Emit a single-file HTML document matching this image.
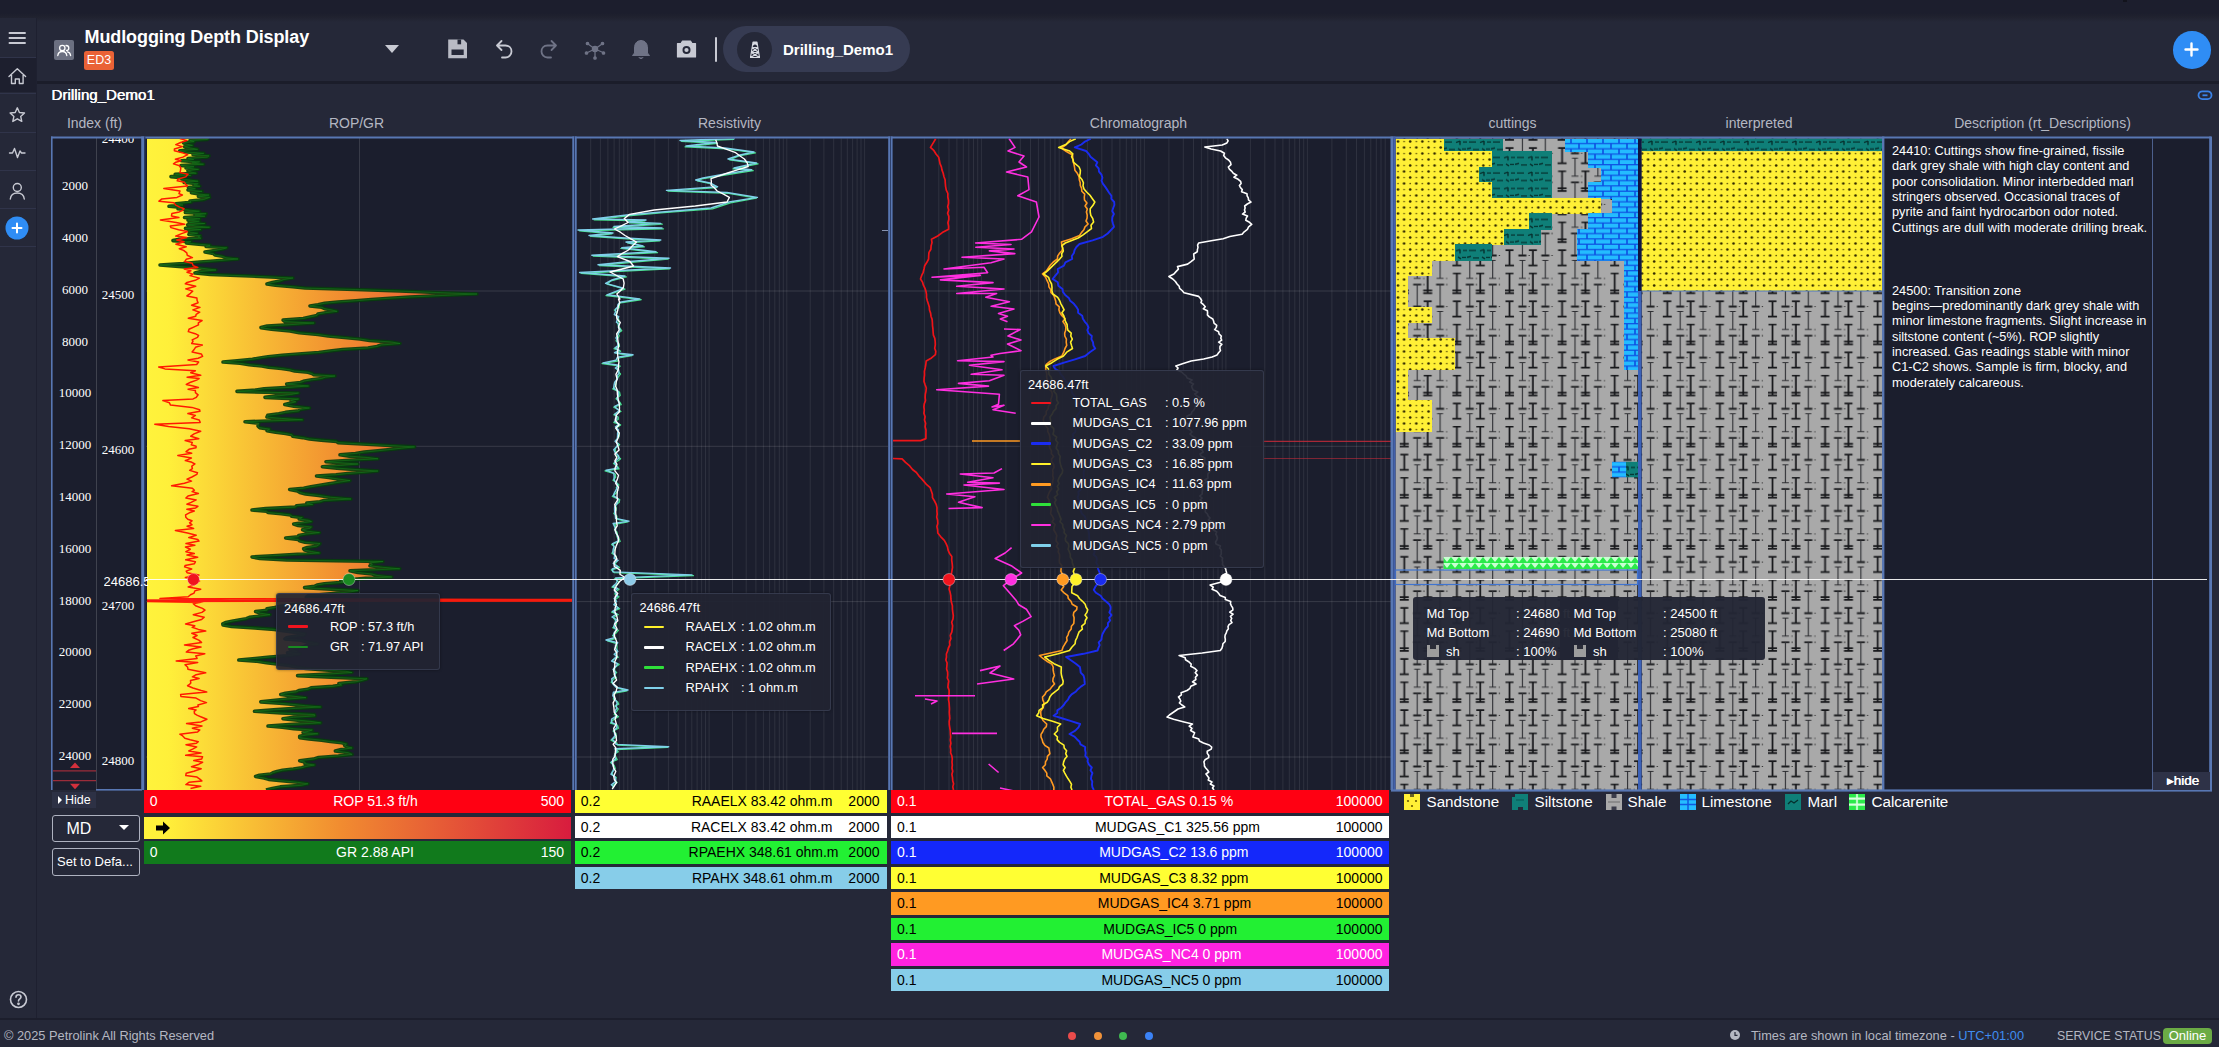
<!DOCTYPE html>
<html><head><meta charset="utf-8"><title>Mudlogging Depth Display</title><style>
*{box-sizing:border-box;margin:0;padding:0}
html,body{width:2219px;height:1047px;overflow:hidden;background:#252838;font-family:"Liberation Sans",sans-serif;color:#fff}
.abs{position:absolute}
.t{position:absolute;white-space:nowrap;line-height:1}
#topstrip{left:0;top:0;width:2219px;height:22px;background:linear-gradient(180deg,#1c1e2d 0,#1c1e2d 60%,#20222f 78%,#252838 100%)}
#side{left:0;top:18px;width:37px;height:1000px;background:#252838;border-right:1.5px solid #1e2030}
#side .sep{position:absolute;left:0;width:36px;height:1px;background:#30344a}
#hdrline{left:37px;top:81px;width:2182px;height:2.5px;background:#1b1d2a}
.trk{position:absolute;top:115px;font-size:14px;color:#b4b7c2;white-space:nowrap;transform:translateX(-50%);line-height:16px}
.idx{position:absolute;font-family:"Liberation Serif",serif;font-size:13px;color:#fff;white-space:nowrap;line-height:14px;transform:translate(-50%,-50%)}
.bar{position:absolute;height:22.6px;font-size:14px;line-height:22.6px;white-space:nowrap}
.bar .l{position:absolute;left:5.800px}.bar .r{position:absolute;right:7px}.bar .c{position:absolute;left:0;right:0;text-align:center}
.tip{position:absolute;background:rgba(33,36,50,0.93);border:1.5px solid rgba(70,76,100,0.55);border-radius:3px;font-size:12.800px;color:#fff;box-shadow:0 0 3px rgba(0,0,0,.4)}
.tip .h{position:absolute;left:7.500px;top:6px;line-height:15px;white-space:nowrap}
.tip .row{position:absolute;left:0;height:20px;line-height:20px;white-space:nowrap}
.tip .sw{position:absolute;left:10.500px;top:8.800px;width:19.500px;height:2.600px;border-radius:1px}
.tip .n{position:absolute;left:52px}
.leg{position:absolute;top:793px;font-size:15.200px;margin-left:0.500px;line-height:17px;color:#fff;white-space:nowrap}
.lic{position:absolute;top:794px;width:16px;height:16px}
.btn{position:absolute;border:1.5px solid #aeb2c0;border-radius:3px;color:#fff;white-space:nowrap}
.desc{position:absolute;left:1892px;font-size:12.750px;line-height:15.35px;color:#fff;white-space:nowrap}
</style></head>
<body>
<div class="abs" id="topstrip"></div>
<div class="abs" id="side">
<div class="abs" style="left:0;top:40px;width:36px;height:34px;background:#1d1f2e"></div>
<div class="sep" style="top:39px"></div>
<div class="sep" style="top:75px"></div>
<div class="sep" style="top:114px"></div>
<div class="sep" style="top:152px"></div>
<div class="sep" style="top:190px"></div>
<div class="sep" style="top:228px"></div>
</div>
<svg class="abs" style="left:0;top:18px" width="37" height="240" viewBox="0 18 37 240" fill="none" stroke="#c8cad3" stroke-width="1.4" stroke-linecap="round" stroke-linejoin="round">
<path d="M9.5 33H25M9.5 38H25M9.500 43H25" stroke-width="1.9"/>
<path d="M9 76.500L17.300 68.800L25.600 76.500M11.500 75V83.500H15.300V79H19.300V83.500H23.100V75"/>
<path d="M17.300 107.800L19.400 112.500L24.500 113L20.700 116.400L21.800 121.400L17.300 118.800L12.800 121.400L13.900 116.400L10.100 113L15.200 112.500Z"/>
<path d="M9.500 153H12.500L14.500 148.500L17.500 157.500L20 151L21.500 153H25"/>
<circle cx="17.300" cy="187.500" r="4"/><path d="M10.300 199C10.800 194.800 13.500 193 17.300 193C21.100 193 23.800 194.800 24.300 199"/>
<circle cx="17" cy="228" r="11.500" fill="#2f8df5" stroke="none"/><path d="M12.500 228H21.500M17 223.500V232.500" stroke="#fff" stroke-width="2"/>
</svg>
<svg class="abs" style="left:8px;top:989px" width="22" height="22" viewBox="0 0 22 22" fill="none" stroke="#c8cad3" stroke-width="1.6" stroke-linecap="round"><circle cx="10.5" cy="10.5" r="8"/><path d="M8 8.300C8 6.500 9.200 5.800 10.500 5.800C12 5.800 13 6.800 13 8C13 9.800 10.500 10 10.500 12"/><circle cx="10.5" cy="14.800" r="0.6" fill="#c8cad3"/></svg>
<div class="abs" style="left:54px;top:39.500px;width:20px;height:20.5px;background:#6b6f80;border-radius:2px"></div>
<svg class="abs" style="left:54px;top:39.500px" width="20" height="21" viewBox="0 0 20 21" fill="none" stroke="#fff" stroke-width="1.3" stroke-linecap="round"><circle cx="8.3" cy="8" r="2.700"/><path d="M3.800 15.500C4.200 12.500 6 11.500 8.300 11.500C10.600 11.500 12.400 12.500 12.800 15.500"/><path d="M12 5.500C13.800 5.500 14.800 6.700 14.800 8C14.800 9.300 13.800 10.500 12.500 10.500M13.500 11.800C15.300 12.100 16.300 13.300 16.600 15.500"/></svg>
<div class="t" style="left:84.5px;top:27.700px;font-size:18px;font-weight:bold;letter-spacing:-0.1px">Mudlogging Depth Display</div>
<div class="abs" style="left:84px;top:51px;width:30px;height:19px;background:#ea6236;border-radius:2.5px;font-size:12.5px;line-height:19px;text-align:center;color:#fff">ED3</div>
<div class="abs" style="left:385px;top:45px;width:0;height:0;border-left:7.5px solid transparent;border-right:7.5px solid transparent;border-top:8px solid #c8cad3"></div>
<svg class="abs" style="left:440px;top:34px" width="280" height="32" viewBox="440 34 280 32" fill="none" stroke-linecap="round" stroke-linejoin="round">
<path d="M448.200 39.500H463.500L467 43V58.200H448.200Z" fill="#b9bbc5" stroke="none"/><rect x="457.500" y="39.500" width="3.600" height="4.800" fill="#252838"/><rect x="451.500" y="49.500" width="12.200" height="5.500" fill="#252838"/>
<path d="M497 45.500H505.500C509.500 45.500 511.500 48.500 511.500 51.500C511.500 54.500 509 57.500 505.500 57.500H502M501.500 41L497 45.500L501.500 50" stroke="#c8cad3" stroke-width="1.800"/>
<path d="M556 45.500H547.500C543.500 45.500 541.500 48.500 541.500 51.500C541.500 54.500 544 57.500 547.500 57.500H551M551.500 41L556 45.500L551.500 50" stroke="#6f7386" stroke-width="1.800"/>
<g stroke="#6f7386" stroke-width="1.300"><circle cx="595" cy="49" r="2.600" fill="#6f7386"/><path d="M595 49L588 44M595 49L602 44M595 49L587.500 52.500M595 49L603 52.500M595 49L595 57"/><circle cx="587.500" cy="43.500" r="1.200" fill="#6f7386"/><circle cx="602.500" cy="43.500" r="1.200" fill="#6f7386"/><circle cx="586.500" cy="53" r="1.200" fill="#6f7386"/><circle cx="603.500" cy="53" r="1.200" fill="#6f7386"/><circle cx="595" cy="58" r="1.200" fill="#6f7386"/></g>
<path d="M641 40.500C636.500 40.500 634.500 44 634.500 48V53L632.500 55.500H649.500L647.500 53V48C647.500 44 645.500 40.500 641 40.500ZM639 57.500C639.500 59 642.500 59 643 57.500" fill="#6f7386" stroke="#6f7386" stroke-width="1"/>
<path d="M677.500 43.500H681L682.500 41H690.500L692 43.500H695.500V57H677.500Z" fill="#c8cad3" stroke="#c8cad3" stroke-width="1.200"/><circle cx="686.500" cy="50" r="4" fill="#252838" stroke="none"/><circle cx="686.500" cy="50" r="2.100" fill="#c8cad3" stroke="none"/>
<path d="M716 38V61" stroke="#c8cad3" stroke-width="2"/>
</svg>
<div class="abs" style="left:723px;top:26px;width:187px;height:46px;border-radius:23px;background:#363b52"></div>
<div class="abs" style="left:737px;top:31.500px;width:35px;height:35px;border-radius:50%;background:#252838"></div>
<svg class="abs" style="left:747px;top:40px" width="16" height="20" viewBox="0 0 16 20" fill="none" stroke="#d8dae2" stroke-width="1.100" stroke-linejoin="round"><path d="M6 2H10L12.500 17.500H3.500ZM5 7.500H11M4.300 12.500H11.700M5 7.500L11.700 12.500M11 7.500L4.300 12.500M4.300 12.500L12.500 17.500M11.700 12.500L3.500 17.500M6 2L10 5M10 2L6 5"/></svg>
<div class="t" style="left:783px;top:41.500px;font-size:15px;font-weight:bold">Drilling_Demo1</div>
<div class="abs" style="left:2173px;top:31px;width:37.500px;height:37.500px;border-radius:50%;background:#2f8df5"></div>
<svg class="abs" style="left:2173.200px;top:31.200px" width="37" height="37" viewBox="0 0 37 37"><path d="M12.500 18.500H24.500M18.500 12.500V24.500" stroke="#fff" stroke-width="2.400" stroke-linecap="round"/></svg>
<div class="abs" id="hdrline"></div>
<div class="abs" style="left:2123px;top:0;width:4px;height:2px;background:#12131c"></div>
<div class="t" style="left:51.300px;top:87px;font-size:15.100px;text-shadow:0.550px 0 0 #fff">Drilling_Demo1</div>
<svg class="abs" style="left:2196.500px;top:89px" width="16" height="12" viewBox="0 0 16 12" fill="none" stroke="#3a82e6" stroke-width="1.800"><rect x="1.500" y="2.300" width="13" height="7.800" rx="3.900"/><path d="M5.500 6.300H10.500"/></svg>
<div class="trk" style="left:94.5px">Index (ft)</div>
<div class="trk" style="left:356.5px">ROP/GR</div>
<div class="trk" style="left:729.5px">Resistivity</div>
<div class="trk" style="left:1138.5px">Chromatograph</div>
<div class="trk" style="left:1512.5px">cuttings</div>
<div class="trk" style="left:1759px">interpreted</div>
<div class="trk" style="left:2042.5px">Description (rt_Descriptions)</div>
<svg width="2219" height="1047" viewBox="0 0 2219 1047" style="position:absolute;left:0;top:0"><defs>
<linearGradient id="grfill" gradientUnits="userSpaceOnUse" x1="147" y1="0" x2="572" y2="0">
 <stop offset="0" stop-color="#fff33c"/><stop offset="0.05" stop-color="#fff03a"/>
 <stop offset="0.46" stop-color="#f18c30"/><stop offset="1" stop-color="#d81c3e"/>
</linearGradient>
<pattern id="pSand" patternUnits="userSpaceOnUse" x="1395" y="138" width="12.2" height="12">
 <rect width="12.2" height="12" fill="#fff036"/>
 <circle cx="3" cy="3.500" r="1.3" fill="#332b00"/><circle cx="9.1" cy="9.500" r="1.3" fill="#332b00"/>
 <circle cx="9.1" cy="3.500" r="0.85" fill="#665808"/><circle cx="3" cy="9.500" r="0.85" fill="#665808"/>
</pattern>
<pattern id="pShale" patternUnits="userSpaceOnUse" x="1399.8" y="681.5" width="52.6" height="51.1">
 <rect width="52.6" height="51.1" fill="#a9a9a9"/>
 <path d="M4.5 0V20.5M0.5 0.5H8.5M0.0 17.8H9.0M0.0 20.6H9.0M4.5 28.2V43.9M0.5 28.7H8.5M0.0 43.9H9.0M27.9 0V20.5M23.9 0.5H31.9M23.4 17.8H32.4M23.4 20.6H32.4M27.9 28.2V43.9M23.9 28.7H31.9M23.4 43.9H32.4" stroke="#16171a" stroke-width="1.75" fill="none"/>
 <path d="M13.399999999999999 33.9H21.4M13.399999999999999 11.9H21.4M36.3 33.9H44.3M36.3 11.9H44.3" stroke="#1c1d20" stroke-width="1.8" fill="none"/>
 <path d="M17.4 39.1V51.1M17.4 0V5.7M13.899999999999999 5.7H20.9M17.4 11.9V33.4M14.399999999999999 38.8H20.4M40.3 39.1V51.1M40.3 0V5.7M36.8 5.7H43.8M40.3 11.9V33.4M37.3 38.8H43.3" stroke="#2c2d31" stroke-width="1.1" fill="none"/>
 <path d="M23.5 33.9h1.3M23.5 11.9h1.3M46.4 33.9h1.3M46.4 11.9h1.3M23.5 5.7h1M46.4 5.7h1" stroke="#333" stroke-width="1.2"/>
</pattern>
<pattern id="pLime" patternUnits="userSpaceOnUse" x="1395" y="138" width="16" height="10.6">
 <rect width="16" height="10.6" fill="#0d4ee2"/>
 <rect x="0.8" y="0.8" width="14.4" height="4.1" fill="#24bcff"/>
 <rect x="-7.200" y="6.1" width="14.4" height="4.1" fill="#24bcff"/><rect x="8.800" y="6.1" width="14.4" height="4.1" fill="#24bcff"/>
</pattern>
<pattern id="pMarl" patternUnits="userSpaceOnUse" x="1395" y="138" width="24" height="15.5">
 <rect width="24" height="15.5" fill="#0f7f78"/>
 <g stroke="#05302e" stroke-width="1.4" fill="none">
  <path d="M2 4H9M13 4.5l4 -1.5M17 3v4M20 4H24M0 11l4 -1M6 11.5H12M15 10.5l3 2M19 11H23"/>
 </g>
</pattern>
<pattern id="pCalc" patternUnits="userSpaceOnUse" x="1443" y="557" width="8" height="6">
 <rect width="8" height="6" fill="#2bea4a"/>
 <path d="M0 0L4 5L8 0Z" fill="#c9ffd2"/>
</pattern>
<clipPath id="cROP"><rect x="147" y="138.5" width="425" height="651.5"/></clipPath>
<clipPath id="cRES"><rect x="577" y="138.5" width="311" height="651.5"/></clipPath>
<clipPath id="cCH"><rect x="893" y="138.5" width="498" height="651.5"/></clipPath>
</defs>
<rect x="52" y="137" width="2159" height="653" fill="#1b1e2d"/>
<path d="M146 291H572M577 291H888M893 291H1391" stroke="#ffffff" stroke-opacity="0.13" stroke-width="1"/>
<path d="M146 446.3H572M577 446.3H888M893 446.3H1391" stroke="#ffffff" stroke-opacity="0.13" stroke-width="1"/>
<path d="M146 601.6H572M577 601.6H888M893 601.6H1391" stroke="#ffffff" stroke-opacity="0.13" stroke-width="1"/>
<path d="M146 757H572M577 757H888M893 757H1391" stroke="#ffffff" stroke-opacity="0.13" stroke-width="1"/>
<path d="M359.5 138V790" stroke="#ffffff" stroke-opacity="0.13" stroke-width="1"/>
<path d="M96.5 138V790" stroke="#ffffff" stroke-opacity="0.16" stroke-width="1"/>
<path d="M590.7 138.5V790M600.4 138.5V790M607.9 138.5V790M614.1 138.5V790M619.3 138.5V790M623.8 138.5V790M627.8 138.5V790M631.3 138.5V790M654.8 138.5V790M668.4 138.5V790M678.2 138.5V790M685.7 138.5V790M691.8 138.5V790M697.1 138.5V790M701.6 138.5V790M705.5 138.5V790M709.1 138.5V790M732.5 138.5V790M746.2 138.5V790M755.9 138.5V790M763.4 138.5V790M769.6 138.5V790M774.8 138.5V790M779.3 138.5V790M783.3 138.5V790M786.8 138.5V790M810.2 138.5V790M823.9 138.5V790M833.7 138.5V790M841.2 138.5V790M847.3 138.5V790M852.6 138.5V790M857.1 138.5V790M861.0 138.5V790M864.6 138.5V790" stroke="#ffffff" stroke-opacity="0.085" stroke-width="1"/>
<path d="M924.4 138.5V790M938.8 138.5V790M949.0 138.5V790M956.9 138.5V790M963.3 138.5V790M968.8 138.5V790M973.5 138.5V790M977.7 138.5V790M981.4 138.5V790M1005.9 138.5V790M1020.3 138.5V790M1030.5 138.5V790M1038.4 138.5V790M1044.8 138.5V790M1050.3 138.5V790M1055.0 138.5V790M1059.2 138.5V790M1062.9 138.5V790M1087.4 138.5V790M1101.8 138.5V790M1112.0 138.5V790M1119.9 138.5V790M1126.3 138.5V790M1131.8 138.5V790M1136.5 138.5V790M1140.7 138.5V790M1144.4 138.5V790M1168.9 138.5V790M1183.3 138.5V790M1193.5 138.5V790M1201.4 138.5V790M1207.8 138.5V790M1213.3 138.5V790M1218.0 138.5V790M1222.2 138.5V790M1225.9 138.5V790M1250.4 138.5V790M1264.8 138.5V790M1275.0 138.5V790M1282.9 138.5V790M1289.3 138.5V790M1294.8 138.5V790M1299.5 138.5V790M1303.7 138.5V790M1307.4 138.5V790M1331.9 138.5V790M1346.3 138.5V790M1356.5 138.5V790M1364.4 138.5V790M1370.8 138.5V790M1376.3 138.5V790M1381.0 138.5V790M1385.2 138.5V790" stroke="#ffffff" stroke-opacity="0.085" stroke-width="1"/>
<g clip-path="url(#cROP)">
<path d="M147.0 138.5 L209.0 138.5 L207.1 139.5 L190.0 140.5 L194.3 141.7 L183.5 142.8 L186.0 144.0 L192.5 145.3 L184.6 146.7 L191.0 148.0 L197.7 149.3 L179.8 150.7 L187.0 152.0 L203.9 153.3 L193.0 154.5 L209.0 155.8 L207.3 157.2 L188.0 158.5 L193.8 159.6 L181.7 160.8 L199.7 161.9 L192.0 163.0 L203.6 164.2 L181.0 165.5 L194.0 166.8 L186.0 168.0 L198.6 169.3 L187.9 170.7 L191.0 172.0 L196.3 173.2 L175.2 174.3 L190.7 175.4 L171.0 176.6 L181.8 177.7 L181.5 178.9 L190.0 180.0 L198.2 181.2 L184.2 182.5 L198.3 183.8 L194.0 185.0 L199.9 186.2 L188.5 187.5 L195.5 188.8 L188.0 190.0 L202.1 191.3 L191.4 192.7 L199.0 194.0 L209.1 195.1 L198.4 196.2 L209.7 197.3 L207.0 198.4 L203.2 199.7 L190.0 201.0 L191.0 202.3 L175.9 203.7 L183.0 205.0 L169.0 206.3 L183.1 207.5 L178.0 208.8 L189.0 210.0 L199.5 211.2 L185.4 212.5 L206.2 213.8 L195.0 215.0 L204.9 216.2 L184.5 217.5 L200.1 218.8 L188.0 220.0 L199.4 221.2 L189.2 222.4 L204.8 223.6 L187.7 224.8 L196.0 226.0 L209.6 227.2 L185.5 228.4 L201.0 229.6 L188.3 230.8 L190.0 232.0 L197.7 233.2 L188.9 234.5 L200.4 235.8 L198.0 237.0 L201.0 238.2 L178.4 239.4 L173.0 240.6 L191.0 241.7 L186.3 242.9 L196.0 244.0 L210.2 245.2 L206.1 246.5 L226.8 247.8 L223.0 249.0 L214.8 250.5 L205.0 252.0 L213.4 253.5 L215.0 255.0 L222.4 256.3 L225.9 257.7 L238.0 259.0 L220.5 260.5 L200.0 262.0 L183.2 263.5 L160.0 265.0 L178.9 266.5 L200.0 268.0 L216.0 270.0 L200.7 271.5 L195.0 273.0 L210.4 274.5 L250.0 276.0 L293.0 278.0 L284.1 279.5 L280.0 281.0 L272.4 282.5 L267.0 284.0 L275.5 285.3 L292.8 286.7 L305.0 288.0 L355.7 289.5 L400.0 291.0 L436.3 292.5 L477.0 294.0 L442.1 295.5 L410.0 297.0 L390.1 298.2 L371.3 299.5 L355.8 300.8 L338.0 302.0 L324.7 303.3 L318.0 304.7 L310.0 306.0 L321.9 307.3 L324.8 308.7 L332.0 310.0 L337.1 311.3 L325.5 312.7 L318.0 314.0 L317.0 315.5 L310.0 317.0 L303.3 318.5 L283.1 320.1 L285.0 321.6 L314.0 323.0 L293.0 324.5 L267.2 326.1 L261.0 327.6 L271.5 329.3 L290.0 331.0 L299.3 332.8 L318.0 334.5 L328.2 336.0 L344.5 337.5 L360.0 339.0 L369.6 340.5 L391.6 342.0 L400.0 343.5 L381.2 345.0 L377.1 346.5 L368.0 348.0 L342.8 349.5 L330.0 351.0 L318.8 352.5 L298.6 354.0 L282.2 355.3 L268.1 356.7 L260.0 358.0 L252.5 359.3 L237.3 360.7 L223.0 362.0 L240.1 363.3 L249.3 364.7 L262.0 366.0 L268.5 367.2 L281.5 368.5 L290.1 369.8 L294.7 371.0 L308.0 372.2 L312.1 373.5 L314.0 374.8 L335.0 376.0 L325.2 377.2 L321.7 378.5 L311.7 379.8 L304.6 381.0 L300.5 382.5 L286.7 384.0 L308.6 386.0 L289.3 387.4 L264.2 388.7 L256.1 390.0 L237.0 391.4 L298.6 393.0 L290.8 394.5 L277.7 395.9 L265.0 397.4 L298.6 399.0 L291.0 400.4 L295.8 401.8 L290.8 403.1 L284.8 404.5 L293.9 406.2 L309.5 408.0 L300.2 409.4 L298.9 410.9 L285.5 412.4 L278.8 413.8 L267.7 415.4 L267.0 417.0 L281.3 418.4 L302.6 419.8 L245.0 421.8 L258.9 423.2 L258.5 424.6 L258.0 426.0 L259.5 427.6 L269.7 429.1 L267.0 430.7 L275.6 432.1 L285.6 433.5 L292.1 434.8 L292.6 436.2 L302.6 437.6 L309.4 438.9 L321.2 440.1 L336.5 441.4 L338.0 442.6 L362.1 444.0 L389.9 445.5 L414.6 446.9 L401.6 448.2 L390.2 449.5 L378.0 450.8 L364.4 452.1 L355.5 453.5 L340.0 454.8 L349.4 456.1 L367.6 457.5 L378.0 458.8 L350.3 460.2 L326.0 461.7 L358.0 464.0 L340.8 465.4 L322.4 466.7 L337.0 468.1 L357.0 469.6 L378.0 471.0 L365.3 472.2 L347.9 473.5 L336.0 474.8 L316.5 476.0 L328.8 477.5 L339.0 479.1 L350.0 480.6 L339.0 482.2 L328.8 483.9 L318.5 485.5 L310.9 486.8 L303.7 488.2 L289.7 489.5 L297.5 491.0 L299.9 492.4 L305.5 493.9 L318.5 495.4 L330.5 497.2 L351.0 499.0 L324.0 500.5 L320.0 501.8 L306.8 503.1 L312.7 504.4 L296.6 505.7 L295.5 507.1 L265.8 508.6 L252.0 510.0 L266.6 511.2 L268.0 512.5 L281.2 513.8 L290.7 515.0 L291.8 516.3 L302.3 517.6 L299.2 519.0 L308.6 520.3 L311.5 521.6 L293.7 524.0 L298.2 525.5 L311.5 527.0 L309.9 528.4 L302.6 529.7 L307.1 531.2 L319.5 532.7 L306.4 534.0 L298.7 535.4 L298.3 536.7 L285.7 538.0 L298.2 539.4 L299.5 540.8 L305.0 542.2 L320.0 543.6 L318.5 545.0 L316.4 546.2 L307.4 547.5 L303.7 548.8 L304.6 550.0 L311.6 551.5 L319.5 553.0 L297.5 554.3 L272.7 555.7 L252.0 557.0 L260.0 558.5 L286.7 560.0 L383.0 561.5 L370.4 562.9 L372.4 564.4 L370.0 565.8 L382.8 567.3 L399.8 568.8 L350.0 570.8 L357.8 572.4 L372.0 574.0 L377.1 575.5 L391.8 577.0 L365.6 578.4 L349.0 579.7 L340.8 581.0 L343.3 582.4 L324.4 583.7 L317.1 585.0 L314.5 586.3 L304.6 587.6 L331.4 589.1 L358.0 590.6 L350.3 591.9 L336.3 593.2 L321.9 594.5 L308.0 595.8 L306.4 597.2 L318.4 598.6 L330.0 600.0 L309.2 601.2 L313.4 602.5 L301.7 603.8 L290.0 605.0 L280.5 606.3 L274.8 607.6 L267.0 608.9 L267.2 610.2 L255.6 611.5 L260.2 613.1 L270.0 614.7 L260.3 616.0 L249.4 617.4 L246.3 618.7 L238.8 620.0 L231.9 621.2 L225.9 622.5 L222.8 623.8 L223.0 625.0 L231.7 626.5 L254.7 627.9 L274.5 629.4 L285.0 630.9 L296.4 632.5 L305.0 634.0 L303.8 635.2 L293.3 636.5 L286.5 637.8 L285.0 639.0 L301.4 640.2 L305.4 641.5 L312.1 642.8 L318.0 644.0 L307.4 645.2 L304.0 646.5 L300.0 647.8 L290.0 649.0 L293.3 650.2 L296.8 651.5 L287.5 652.8 L300.0 654.0 L290.0 655.5 L270.0 657.0 L255.4 658.5 L238.8 660.0 L257.2 661.3 L266.5 662.7 L276.6 664.0 L289.1 665.5 L296.5 667.0 L305.7 668.5 L325.0 670.0 L345.6 671.2 L352.0 672.5 L329.6 674.0 L297.6 675.6 L331.1 677.2 L367.0 678.8 L362.5 680.3 L355.5 681.9 L338.9 683.5 L341.7 685.0 L332.9 686.4 L311.1 687.9 L308.0 689.3 L298.9 690.6 L296.3 691.9 L285.5 693.2 L280.8 694.5 L293.0 696.1 L306.0 697.7 L287.1 699.1 L272.9 700.5 L260.8 701.9 L279.3 703.2 L293.9 704.5 L305.2 705.7 L320.7 707.0 L295.7 708.4 L273.7 709.9 L254.5 711.3 L280.9 712.9 L314.4 714.5 L314.9 715.9 L293.6 717.3 L283.0 718.7 L297.6 720.1 L312.1 721.5 L320.7 722.9 L289.4 724.5 L268.0 726.0 L282.3 727.3 L293.9 728.7 L312.3 730.0 L308.4 731.3 L303.1 732.5 L317.9 733.8 L306.0 735.1 L299.7 736.3 L299.7 737.6 L309.1 738.9 L321.6 740.2 L330.5 741.5 L341.7 742.8 L346.5 744.1 L344.7 745.4 L346.9 746.7 L352.0 748.0 L341.3 749.5 L335.4 751.0 L348.3 752.7 L352.0 754.4 L338.4 756.0 L318.6 757.5 L313.3 759.1 L299.7 760.7 L305.1 762.1 L305.0 763.6 L314.4 765.0 L306.9 766.3 L301.8 767.7 L293.4 769.0 L282.6 770.2 L277.1 771.5 L272.9 772.8 L270.6 774.0 L259.5 775.2 L255.6 776.5 L264.1 778.0 L268.7 779.4 L284.1 780.9 L297.5 782.3 L308.0 783.8 L301.6 785.3 L280.3 786.9 L272.4 788.5 L266.0 790.0 L147.0 790.0Z" fill="url(#grfill)"/>
<path d="M209.0 138.5 L207.1 139.5 L190.0 140.5 L194.3 141.7 L183.5 142.8 L186.0 144.0 L192.5 145.3 L184.6 146.7 L191.0 148.0 L197.7 149.3 L179.8 150.7 L187.0 152.0 L203.9 153.3 L193.0 154.5 L209.0 155.8 L207.3 157.2 L188.0 158.5 L193.8 159.6 L181.7 160.8 L199.7 161.9 L192.0 163.0 L203.6 164.2 L181.0 165.5 L194.0 166.8 L186.0 168.0 L198.6 169.3 L187.9 170.7 L191.0 172.0 L196.3 173.2 L175.2 174.3 L190.7 175.4 L171.0 176.6 L181.8 177.7 L181.5 178.9 L190.0 180.0 L198.2 181.2 L184.2 182.5 L198.3 183.8 L194.0 185.0 L199.9 186.2 L188.5 187.5 L195.5 188.8 L188.0 190.0 L202.1 191.3 L191.4 192.7 L199.0 194.0 L209.1 195.1 L198.4 196.2 L209.7 197.3 L207.0 198.4 L203.2 199.7 L190.0 201.0 L191.0 202.3 L175.9 203.7 L183.0 205.0 L169.0 206.3 L183.1 207.5 L178.0 208.8 L189.0 210.0 L199.5 211.2 L185.4 212.5 L206.2 213.8 L195.0 215.0 L204.9 216.2 L184.5 217.5 L200.1 218.8 L188.0 220.0 L199.4 221.2 L189.2 222.4 L204.8 223.6 L187.7 224.8 L196.0 226.0 L209.6 227.2 L185.5 228.4 L201.0 229.6 L188.3 230.8 L190.0 232.0 L197.7 233.2 L188.9 234.5 L200.4 235.8 L198.0 237.0 L201.0 238.2 L178.4 239.4 L173.0 240.6 L191.0 241.7 L186.3 242.9 L196.0 244.0 L210.2 245.2 L206.1 246.5 L226.8 247.8 L223.0 249.0 L214.8 250.5 L205.0 252.0 L213.4 253.5 L215.0 255.0 L222.4 256.3 L225.9 257.7 L238.0 259.0 L220.5 260.5 L200.0 262.0 L183.2 263.5 L160.0 265.0 L178.9 266.5 L200.0 268.0 L216.0 270.0 L200.7 271.5 L195.0 273.0 L210.4 274.5 L250.0 276.0 L293.0 278.0 L284.1 279.5 L280.0 281.0 L272.4 282.5 L267.0 284.0 L275.5 285.3 L292.8 286.7 L305.0 288.0 L355.7 289.5 L400.0 291.0 L436.3 292.5 L477.0 294.0 L442.1 295.5 L410.0 297.0 L390.1 298.2 L371.3 299.5 L355.8 300.8 L338.0 302.0 L324.7 303.3 L318.0 304.7 L310.0 306.0 L321.9 307.3 L324.8 308.7 L332.0 310.0 L337.1 311.3 L325.5 312.7 L318.0 314.0 L317.0 315.5 L310.0 317.0 L303.3 318.5 L283.1 320.1 L285.0 321.6 L314.0 323.0 L293.0 324.5 L267.2 326.1 L261.0 327.6 L271.5 329.3 L290.0 331.0 L299.3 332.8 L318.0 334.5 L328.2 336.0 L344.5 337.5 L360.0 339.0 L369.6 340.5 L391.6 342.0 L400.0 343.5 L381.2 345.0 L377.1 346.5 L368.0 348.0 L342.8 349.5 L330.0 351.0 L318.8 352.5 L298.6 354.0 L282.2 355.3 L268.1 356.7 L260.0 358.0 L252.5 359.3 L237.3 360.7 L223.0 362.0 L240.1 363.3 L249.3 364.7 L262.0 366.0 L268.5 367.2 L281.5 368.5 L290.1 369.8 L294.7 371.0 L308.0 372.2 L312.1 373.5 L314.0 374.8 L335.0 376.0 L325.2 377.2 L321.7 378.5 L311.7 379.8 L304.6 381.0 L300.5 382.5 L286.7 384.0 L308.6 386.0 L289.3 387.4 L264.2 388.7 L256.1 390.0 L237.0 391.4 L298.6 393.0 L290.8 394.5 L277.7 395.9 L265.0 397.4 L298.6 399.0 L291.0 400.4 L295.8 401.8 L290.8 403.1 L284.8 404.5 L293.9 406.2 L309.5 408.0 L300.2 409.4 L298.9 410.9 L285.5 412.4 L278.8 413.8 L267.7 415.4 L267.0 417.0 L281.3 418.4 L302.6 419.8 L245.0 421.8 L258.9 423.2 L258.5 424.6 L258.0 426.0 L259.5 427.6 L269.7 429.1 L267.0 430.7 L275.6 432.1 L285.6 433.5 L292.1 434.8 L292.6 436.2 L302.6 437.6 L309.4 438.9 L321.2 440.1 L336.5 441.4 L338.0 442.6 L362.1 444.0 L389.9 445.5 L414.6 446.9 L401.6 448.2 L390.2 449.5 L378.0 450.8 L364.4 452.1 L355.5 453.5 L340.0 454.8 L349.4 456.1 L367.6 457.5 L378.0 458.8 L350.3 460.2 L326.0 461.7 L358.0 464.0 L340.8 465.4 L322.4 466.7 L337.0 468.1 L357.0 469.6 L378.0 471.0 L365.3 472.2 L347.9 473.5 L336.0 474.8 L316.5 476.0 L328.8 477.5 L339.0 479.1 L350.0 480.6 L339.0 482.2 L328.8 483.9 L318.5 485.5 L310.9 486.8 L303.7 488.2 L289.7 489.5 L297.5 491.0 L299.9 492.4 L305.5 493.9 L318.5 495.4 L330.5 497.2 L351.0 499.0 L324.0 500.5 L320.0 501.8 L306.8 503.1 L312.7 504.4 L296.6 505.7 L295.5 507.1 L265.8 508.6 L252.0 510.0 L266.6 511.2 L268.0 512.5 L281.2 513.8 L290.7 515.0 L291.8 516.3 L302.3 517.6 L299.2 519.0 L308.6 520.3 L311.5 521.6 L293.7 524.0 L298.2 525.5 L311.5 527.0 L309.9 528.4 L302.6 529.7 L307.1 531.2 L319.5 532.7 L306.4 534.0 L298.7 535.4 L298.3 536.7 L285.7 538.0 L298.2 539.4 L299.5 540.8 L305.0 542.2 L320.0 543.6 L318.5 545.0 L316.4 546.2 L307.4 547.5 L303.7 548.8 L304.6 550.0 L311.6 551.5 L319.5 553.0 L297.5 554.3 L272.7 555.7 L252.0 557.0 L260.0 558.5 L286.7 560.0 L383.0 561.5 L370.4 562.9 L372.4 564.4 L370.0 565.8 L382.8 567.3 L399.8 568.8 L350.0 570.8 L357.8 572.4 L372.0 574.0 L377.1 575.5 L391.8 577.0 L365.6 578.4 L349.0 579.7 L340.8 581.0 L343.3 582.4 L324.4 583.7 L317.1 585.0 L314.5 586.3 L304.6 587.6 L331.4 589.1 L358.0 590.6 L350.3 591.9 L336.3 593.2 L321.9 594.5 L308.0 595.8 L306.4 597.2 L318.4 598.6 L330.0 600.0 L309.2 601.2 L313.4 602.5 L301.7 603.8 L290.0 605.0 L280.5 606.3 L274.8 607.6 L267.0 608.9 L267.2 610.2 L255.6 611.5 L260.2 613.1 L270.0 614.7 L260.3 616.0 L249.4 617.4 L246.3 618.7 L238.8 620.0 L231.9 621.2 L225.9 622.5 L222.8 623.8 L223.0 625.0 L231.7 626.5 L254.7 627.9 L274.5 629.4 L285.0 630.9 L296.4 632.5 L305.0 634.0 L303.8 635.2 L293.3 636.5 L286.5 637.8 L285.0 639.0 L301.4 640.2 L305.4 641.5 L312.1 642.8 L318.0 644.0 L307.4 645.2 L304.0 646.5 L300.0 647.8 L290.0 649.0 L293.3 650.2 L296.8 651.5 L287.5 652.8 L300.0 654.0 L290.0 655.5 L270.0 657.0 L255.4 658.5 L238.8 660.0 L257.2 661.3 L266.5 662.7 L276.6 664.0 L289.1 665.5 L296.5 667.0 L305.7 668.5 L325.0 670.0 L345.6 671.2 L352.0 672.5 L329.6 674.0 L297.6 675.6 L331.1 677.2 L367.0 678.8 L362.5 680.3 L355.5 681.9 L338.9 683.5 L341.7 685.0 L332.9 686.4 L311.1 687.9 L308.0 689.3 L298.9 690.6 L296.3 691.9 L285.5 693.2 L280.8 694.5 L293.0 696.1 L306.0 697.7 L287.1 699.1 L272.9 700.5 L260.8 701.9 L279.3 703.2 L293.9 704.5 L305.2 705.7 L320.7 707.0 L295.7 708.4 L273.7 709.9 L254.5 711.3 L280.9 712.9 L314.4 714.5 L314.9 715.9 L293.6 717.3 L283.0 718.7 L297.6 720.1 L312.1 721.5 L320.7 722.9 L289.4 724.5 L268.0 726.0 L282.3 727.3 L293.9 728.7 L312.3 730.0 L308.4 731.3 L303.1 732.5 L317.9 733.8 L306.0 735.1 L299.7 736.3 L299.7 737.6 L309.1 738.9 L321.6 740.2 L330.5 741.5 L341.7 742.8 L346.5 744.1 L344.7 745.4 L346.9 746.7 L352.0 748.0 L341.3 749.5 L335.4 751.0 L348.3 752.7 L352.0 754.4 L338.4 756.0 L318.6 757.5 L313.3 759.1 L299.7 760.7 L305.1 762.1 L305.0 763.6 L314.4 765.0 L306.9 766.3 L301.8 767.7 L293.4 769.0 L282.6 770.2 L277.1 771.5 L272.9 772.8 L270.6 774.0 L259.5 775.2 L255.6 776.5 L264.1 778.0 L268.7 779.4 L284.1 780.9 L297.5 782.3 L308.0 783.8 L301.6 785.3 L280.3 786.9 L272.4 788.5 L266.0 790.0" fill="none" stroke="#083d0e" stroke-width="3.6" stroke-linejoin="round" stroke-opacity="0.92"/>
<path d="M209.0 138.5 L207.1 139.5 L190.0 140.5 L194.3 141.7 L183.5 142.8 L186.0 144.0 L192.5 145.3 L184.6 146.7 L191.0 148.0 L197.7 149.3 L179.8 150.7 L187.0 152.0 L203.9 153.3 L193.0 154.5 L209.0 155.8 L207.3 157.2 L188.0 158.5 L193.8 159.6 L181.7 160.8 L199.7 161.9 L192.0 163.0 L203.6 164.2 L181.0 165.5 L194.0 166.8 L186.0 168.0 L198.6 169.3 L187.9 170.7 L191.0 172.0 L196.3 173.2 L175.2 174.3 L190.7 175.4 L171.0 176.6 L181.8 177.7 L181.5 178.9 L190.0 180.0 L198.2 181.2 L184.2 182.5 L198.3 183.8 L194.0 185.0 L199.9 186.2 L188.5 187.5 L195.5 188.8 L188.0 190.0 L202.1 191.3 L191.4 192.7 L199.0 194.0 L209.1 195.1 L198.4 196.2 L209.7 197.3 L207.0 198.4 L203.2 199.7 L190.0 201.0 L191.0 202.3 L175.9 203.7 L183.0 205.0 L169.0 206.3 L183.1 207.5 L178.0 208.8 L189.0 210.0 L199.5 211.2 L185.4 212.5 L206.2 213.8 L195.0 215.0 L204.9 216.2 L184.5 217.5 L200.1 218.8 L188.0 220.0 L199.4 221.2 L189.2 222.4 L204.8 223.6 L187.7 224.8 L196.0 226.0 L209.6 227.2 L185.5 228.4 L201.0 229.6 L188.3 230.8 L190.0 232.0 L197.7 233.2 L188.9 234.5 L200.4 235.8 L198.0 237.0 L201.0 238.2 L178.4 239.4 L173.0 240.6 L191.0 241.7 L186.3 242.9 L196.0 244.0 L210.2 245.2 L206.1 246.5 L226.8 247.8 L223.0 249.0 L214.8 250.5 L205.0 252.0 L213.4 253.5 L215.0 255.0 L222.4 256.3 L225.9 257.7 L238.0 259.0 L220.5 260.5 L200.0 262.0 L183.2 263.5 L160.0 265.0 L178.9 266.5 L200.0 268.0 L216.0 270.0 L200.7 271.5 L195.0 273.0 L210.4 274.5 L250.0 276.0 L293.0 278.0 L284.1 279.5 L280.0 281.0 L272.4 282.5 L267.0 284.0 L275.5 285.3 L292.8 286.7 L305.0 288.0 L355.7 289.5 L400.0 291.0 L436.3 292.5 L477.0 294.0 L442.1 295.5 L410.0 297.0 L390.1 298.2 L371.3 299.5 L355.8 300.8 L338.0 302.0 L324.7 303.3 L318.0 304.7 L310.0 306.0 L321.9 307.3 L324.8 308.7 L332.0 310.0 L337.1 311.3 L325.5 312.7 L318.0 314.0 L317.0 315.5 L310.0 317.0 L303.3 318.5 L283.1 320.1 L285.0 321.6 L314.0 323.0 L293.0 324.5 L267.2 326.1 L261.0 327.6 L271.5 329.3 L290.0 331.0 L299.3 332.8 L318.0 334.5 L328.2 336.0 L344.5 337.5 L360.0 339.0 L369.6 340.5 L391.6 342.0 L400.0 343.5 L381.2 345.0 L377.1 346.5 L368.0 348.0 L342.8 349.5 L330.0 351.0 L318.8 352.5 L298.6 354.0 L282.2 355.3 L268.1 356.7 L260.0 358.0 L252.5 359.3 L237.3 360.7 L223.0 362.0 L240.1 363.3 L249.3 364.7 L262.0 366.0 L268.5 367.2 L281.5 368.5 L290.1 369.8 L294.7 371.0 L308.0 372.2 L312.1 373.5 L314.0 374.8 L335.0 376.0 L325.2 377.2 L321.7 378.5 L311.7 379.8 L304.6 381.0 L300.5 382.5 L286.7 384.0 L308.6 386.0 L289.3 387.4 L264.2 388.7 L256.1 390.0 L237.0 391.4 L298.6 393.0 L290.8 394.5 L277.7 395.9 L265.0 397.4 L298.6 399.0 L291.0 400.4 L295.8 401.8 L290.8 403.1 L284.8 404.5 L293.9 406.2 L309.5 408.0 L300.2 409.4 L298.9 410.9 L285.5 412.4 L278.8 413.8 L267.7 415.4 L267.0 417.0 L281.3 418.4 L302.6 419.8 L245.0 421.8 L258.9 423.2 L258.5 424.6 L258.0 426.0 L259.5 427.6 L269.7 429.1 L267.0 430.7 L275.6 432.1 L285.6 433.5 L292.1 434.8 L292.6 436.2 L302.6 437.6 L309.4 438.9 L321.2 440.1 L336.5 441.4 L338.0 442.6 L362.1 444.0 L389.9 445.5 L414.6 446.9 L401.6 448.2 L390.2 449.5 L378.0 450.8 L364.4 452.1 L355.5 453.5 L340.0 454.8 L349.4 456.1 L367.6 457.5 L378.0 458.8 L350.3 460.2 L326.0 461.7 L358.0 464.0 L340.8 465.4 L322.4 466.7 L337.0 468.1 L357.0 469.6 L378.0 471.0 L365.3 472.2 L347.9 473.5 L336.0 474.8 L316.5 476.0 L328.8 477.5 L339.0 479.1 L350.0 480.6 L339.0 482.2 L328.8 483.9 L318.5 485.5 L310.9 486.8 L303.7 488.2 L289.7 489.5 L297.5 491.0 L299.9 492.4 L305.5 493.9 L318.5 495.4 L330.5 497.2 L351.0 499.0 L324.0 500.5 L320.0 501.8 L306.8 503.1 L312.7 504.4 L296.6 505.7 L295.5 507.1 L265.8 508.6 L252.0 510.0 L266.6 511.2 L268.0 512.5 L281.2 513.8 L290.7 515.0 L291.8 516.3 L302.3 517.6 L299.2 519.0 L308.6 520.3 L311.5 521.6 L293.7 524.0 L298.2 525.5 L311.5 527.0 L309.9 528.4 L302.6 529.7 L307.1 531.2 L319.5 532.7 L306.4 534.0 L298.7 535.4 L298.3 536.7 L285.7 538.0 L298.2 539.4 L299.5 540.8 L305.0 542.2 L320.0 543.6 L318.5 545.0 L316.4 546.2 L307.4 547.5 L303.7 548.8 L304.6 550.0 L311.6 551.5 L319.5 553.0 L297.5 554.3 L272.7 555.7 L252.0 557.0 L260.0 558.5 L286.7 560.0 L383.0 561.5 L370.4 562.9 L372.4 564.4 L370.0 565.8 L382.8 567.3 L399.8 568.8 L350.0 570.8 L357.8 572.4 L372.0 574.0 L377.1 575.5 L391.8 577.0 L365.6 578.4 L349.0 579.7 L340.8 581.0 L343.3 582.4 L324.4 583.7 L317.1 585.0 L314.5 586.3 L304.6 587.6 L331.4 589.1 L358.0 590.6 L350.3 591.9 L336.3 593.2 L321.9 594.5 L308.0 595.8 L306.4 597.2 L318.4 598.6 L330.0 600.0 L309.2 601.2 L313.4 602.5 L301.7 603.8 L290.0 605.0 L280.5 606.3 L274.8 607.6 L267.0 608.9 L267.2 610.2 L255.6 611.5 L260.2 613.1 L270.0 614.7 L260.3 616.0 L249.4 617.4 L246.3 618.7 L238.8 620.0 L231.9 621.2 L225.9 622.5 L222.8 623.8 L223.0 625.0 L231.7 626.5 L254.7 627.9 L274.5 629.4 L285.0 630.9 L296.4 632.5 L305.0 634.0 L303.8 635.2 L293.3 636.5 L286.5 637.8 L285.0 639.0 L301.4 640.2 L305.4 641.5 L312.1 642.8 L318.0 644.0 L307.4 645.2 L304.0 646.5 L300.0 647.8 L290.0 649.0 L293.3 650.2 L296.8 651.5 L287.5 652.8 L300.0 654.0 L290.0 655.5 L270.0 657.0 L255.4 658.5 L238.8 660.0 L257.2 661.3 L266.5 662.7 L276.6 664.0 L289.1 665.5 L296.5 667.0 L305.7 668.5 L325.0 670.0 L345.6 671.2 L352.0 672.5 L329.6 674.0 L297.6 675.6 L331.1 677.2 L367.0 678.8 L362.5 680.3 L355.5 681.9 L338.9 683.5 L341.7 685.0 L332.9 686.4 L311.1 687.9 L308.0 689.3 L298.9 690.6 L296.3 691.9 L285.5 693.2 L280.8 694.5 L293.0 696.1 L306.0 697.7 L287.1 699.1 L272.9 700.5 L260.8 701.9 L279.3 703.2 L293.9 704.5 L305.2 705.7 L320.7 707.0 L295.7 708.4 L273.7 709.9 L254.5 711.3 L280.9 712.9 L314.4 714.5 L314.9 715.9 L293.6 717.3 L283.0 718.7 L297.6 720.1 L312.1 721.5 L320.7 722.9 L289.4 724.5 L268.0 726.0 L282.3 727.3 L293.9 728.7 L312.3 730.0 L308.4 731.3 L303.1 732.5 L317.9 733.8 L306.0 735.1 L299.7 736.3 L299.7 737.6 L309.1 738.9 L321.6 740.2 L330.5 741.5 L341.7 742.8 L346.5 744.1 L344.7 745.4 L346.9 746.7 L352.0 748.0 L341.3 749.5 L335.4 751.0 L348.3 752.7 L352.0 754.4 L338.4 756.0 L318.6 757.5 L313.3 759.1 L299.7 760.7 L305.1 762.1 L305.0 763.6 L314.4 765.0 L306.9 766.3 L301.8 767.7 L293.4 769.0 L282.6 770.2 L277.1 771.5 L272.9 772.8 L270.6 774.0 L259.5 775.2 L255.6 776.5 L264.1 778.0 L268.7 779.4 L284.1 780.9 L297.5 782.3 L308.0 783.8 L301.6 785.3 L280.3 786.9 L272.4 788.5 L266.0 790.0" fill="none" stroke="#14801c" stroke-width="1" stroke-linejoin="round" stroke-opacity="0.55"/>
<path d="M179.8 138.5 L186.9 140.6 L180.6 142.5 L175.8 144.6 L182.4 146.6 L174.4 149.0 L174.4 150.8 L183.4 153.1 L187.7 154.6 L182.8 157.1 L175.4 159.3 L180.9 160.7 L175.9 162.2 L173.5 163.9 L179.6 165.8 L180.8 168.2 L180.5 170.4 L179.9 172.6 L188.0 174.3 L185.6 176.9 L177.7 179.2 L177.3 180.8 L184.5 182.3 L185.7 184.2 L187.4 186.1 L163.8 188.5 L180.0 191.0 L179.0 193.6 L182.4 195.0 L177.0 197.4 L161.9 198.9 L159.0 201.2 L173.9 202.7 L175.7 205.1 L179.7 207.1 L184.0 208.8 L182.7 210.3 L179.3 211.9 L171.9 213.5 L171.5 215.9 L178.9 217.5 L160.4 220.0 L176.2 222.6 L184.6 224.3 L170.3 226.1 L171.0 227.6 L178.6 229.7 L187.4 231.6 L181.6 233.6 L175.7 236.1 L186.6 237.6 L176.7 240.0 L184.1 241.7 L175.9 244.2 L186.2 246.7 L179.3 248.8 L183.6 250.4 L186.8 252.9 L187.2 255.2 L192.4 257.6 L186.2 259.3 L184.7 261.6 L192.2 263.2 L193.2 265.7 L197.8 267.4 L184.4 269.1 L190.9 270.8 L187.0 272.2 L193.0 274.1 L190.0 275.6 L199.4 278.1 L195.2 280.3 L187.0 282.4 L185.3 283.8 L195.7 286.3 L185.7 288.9 L192.7 291.1 L190.4 293.3 L186.9 295.9 L196.9 298.0 L197.1 300.5 L198.1 302.7 L191.6 305.2 L200.0 307.4 L192.9 309.9 L199.7 312.2 L196.2 314.3 L195.7 316.2 L188.3 318.3 L202.1 320.5 L198.3 322.9 L198.5 324.8 L194.2 326.9 L189.0 329.3 L188.3 331.6 L195.2 333.7 L198.6 335.4 L197.5 337.4 L192.2 339.9 L193.0 341.3 L191.7 343.5 L202.3 345.1 L195.5 347.3 L193.9 349.8 L192.1 352.0 L201.3 353.9 L202.6 356.4 L198.2 358.3 L188.0 360.0 L198.6 362.0 L196.7 364.5 L158.7 367.0 L164.9 368.9 L195.4 370.8 L190.7 372.8 L200.7 375.2 L187.1 377.2 L199.1 378.6 L196.6 380.1 L190.6 382.2 L186.3 384.5 L192.8 386.1 L198.4 387.5 L188.1 389.2 L195.4 390.6 L195.4 392.6 L198.1 394.8 L196.3 397.3 L193.1 398.9 L162.9 400.6 L169.4 402.8 L170.5 405.1 L191.9 407.4 L199.6 409.7 L200.0 411.2 L187.9 413.5 L195.4 415.4 L191.7 417.9 L199.2 420.0 L200.2 422.4 L154.8 424.3 L168.6 426.6 L189.2 428.8 L200.7 431.3 L194.1 433.9 L190.8 436.2 L198.8 438.7 L185.2 440.6 L192.3 442.5 L191.3 444.8 L196.1 446.2 L196.0 447.7 L189.0 449.3 L186.1 451.7 L191.7 453.2 L177.8 455.5 L191.4 458.1 L185.3 460.6 L191.9 462.3 L194.9 464.0 L191.8 466.2 L192.4 468.6 L189.7 470.4 L197.5 472.8 L196.8 474.4 L191.9 477.0 L187.0 479.1 L191.5 481.1 L184.4 483.2 L171.6 485.8 L192.4 488.2 L194.4 490.2 L192.1 491.6 L198.4 493.5 L188.0 496.0 L185.9 498.0 L196.2 499.9 L191.1 502.4 L186.9 504.2 L197.9 506.3 L195.7 507.9 L186.9 509.3 L194.3 511.0 L189.3 512.8 L185.6 514.9 L185.8 517.2 L187.8 519.2 L192.0 520.8 L189.6 522.8 L191.9 524.7 L187.1 526.3 L193.6 528.4 L175.4 530.4 L187.5 532.9 L196.2 535.2 L188.7 537.6 L197.8 539.4 L199.0 541.1 L186.0 543.6 L194.9 545.2 L185.5 547.0 L190.3 549.3 L185.9 551.7 L194.3 553.6 L187.0 555.0 L197.7 557.2 L185.7 559.8 L195.4 561.8 L194.3 563.8 L185.1 565.4 L184.6 566.9 L191.7 569.0 L186.2 571.1 L187.1 572.7 L198.9 575.1 L185.4 577.6 L198.3 579.1 L199.5 581.1 L195.0 582.9 L194.5 584.9 L188.2 587.0 L200.7 589.2 L194.8 590.9 L194.1 593.1 L190.5 594.8 L188.2 596.8 L160.0 598.6 L572.0 599.6 L572.0 601.0 L146.0 601.4 L200.0 602.4 L200.0 599.3 L203.8 601.5 L193.3 603.7 L195.6 605.8 L202.5 608.4 L205.0 610.1 L201.9 612.4 L193.3 614.7 L204.2 617.2 L201.6 619.5 L193.3 621.8 L185.6 624.0 L194.8 625.8 L192.2 627.3 L198.4 629.4 L205.7 631.1 L191.8 633.3 L197.1 635.5 L193.0 637.5 L198.8 640.1 L201.5 642.4 L184.5 645.0 L201.0 647.1 L193.2 648.8 L188.5 650.3 L186.3 652.1 L204.8 653.8 L195.7 655.9 L197.1 658.4 L176.2 661.0 L197.7 662.5 L185.0 664.8 L187.7 667.3 L187.9 669.3 L198.1 671.3 L205.7 672.8 L196.1 674.7 L192.4 676.8 L199.1 678.5 L190.5 680.6 L190.8 682.9 L189.6 684.3 L187.6 685.7 L193.0 688.0 L201.2 690.5 L206.7 692.0 L180.6 694.5 L180.9 696.4 L196.0 698.1 L200.6 700.6 L206.5 702.6 L197.9 705.0 L198.4 706.5 L188.7 708.5 L196.1 709.9 L194.2 711.5 L194.5 713.7 L197.4 715.4 L201.9 717.3 L206.9 719.3 L200.9 721.9 L186.6 723.6 L202.0 726.0 L192.3 728.2 L199.8 729.9 L197.6 732.0 L179.8 734.2 L182.7 735.9 L184.9 738.3 L190.2 739.8 L198.3 741.7 L196.5 743.2 L186.0 744.7 L196.7 746.9 L192.6 749.1 L188.8 751.0 L201.1 752.9 L185.7 755.3 L202.6 756.8 L201.7 759.0 L193.8 760.6 L202.6 762.3 L199.0 764.2 L191.5 766.8 L201.2 768.8 L193.8 771.3 L186.2 773.2 L185.8 775.6 L197.0 777.1 L199.8 779.1 L201.8 780.9 L188.9 782.3 L185.9 784.5 L200.7 786.3 L190.5 788.5" fill="none" stroke="#ff1a00" stroke-width="1.5" stroke-linejoin="round"/>
<rect x="147" y="599.3" width="425" height="2" fill="#f51a10"/><path d="M168 600.3L182 598.4H215L232 600.3L215 601.9H182Z" fill="#ff1a10"/>
</g>
<g clip-path="url(#cRES)" fill="none" stroke-linejoin="round">
<path d="M734.0 139.3 L681.5 141.3 L717.5 143.3 L685.0 146.8 L726.5 148.8 L755.5 152.8 L739.0 155.8 L729.5 159.8 L758.1 163.8 L733.0 168.8 L753.2 170.6 L726.5 174.8 L702.0 178.8 L697.2 180.8 L711.5 183.8 L716.6 187.6 L668.0 191.2 L728.5 193.3 L756.4 198.2 L730.5 202.8 L712.5 208.8 L661.0 212.8 L628.2 215.8 L594.1 219.8 L645.0 220.8 L629.5 222.8 L662.3 224.2 L613.0 227.3 L663.5 228.8 L579.5 230.8 L612.0 233.8 L590.5 236.3 L626.5 238.8 L659.8 240.8 L627.5 242.8 L644.5 246.8 L620.8 248.5 L657.5 252.6 L593.3 256.1 L668.0 259.1 L631.5 262.3 L599.5 265.6 L669.5 268.8 L581.1 273.3 L626.5 276.8 L611.0 280.8 L607.1 284.2 L625.0 289.1 L606.0 295.6 L641.2 299.7 L640.5 299.8 L619.0 303.1 L619.5 305.2 L619.1 307.8 L614.4 310.0 L617.1 312.6 L615.8 315.3 L617.7 317.4 L618.9 320.0 L617.9 323.0 L618.1 325.1 L619.8 327.9 L621.8 330.8 L617.9 333.3 L619.2 335.8 L617.5 338.7 L616.0 340.9 L619.2 343.9 L619.5 346.5 L614.1 348.7 L620.6 351.2 L616.1 353.5 L632.0 355.6 L619.0 358.0 L617.4 361.1 L602.0 363.7 L620.2 366.1 L616.9 368.9 L617.7 371.0 L620.5 374.0 L618.7 376.3 L616.5 379.6 L616.2 382.9 L615.5 386.3 L612.7 388.9 L619.5 392.0 L620.2 395.4 L616.0 398.7 L619.8 402.1 L621.2 404.6 L613.7 407.1 L617.9 409.2 L620.9 411.5 L613.8 414.8 L618.2 417.0 L618.3 419.2 L613.9 422.3 L620.6 424.9 L617.0 427.6 L617.5 430.8 L619.1 434.1 L619.1 436.6 L616.3 439.8 L616.6 442.1 L619.6 444.7 L615.6 447.5 L615.3 450.6 L616.7 453.5 L617.4 456.3 L620.6 458.7 L618.1 460.8 L613.5 463.5 L617.5 466.3 L619.0 468.9 L605.0 470.9 L615.3 474.0 L615.7 477.3 L613.0 480.2 L617.0 482.8 L618.8 485.0 L616.2 487.6 L617.8 490.4 L616.2 493.1 L612.3 496.4 L619.7 499.6 L619.2 502.3 L615.5 505.2 L616.2 507.7 L616.1 510.1 L613.8 513.5 L616.8 516.0 L617.1 519.2 L628.0 521.9 L614.6 524.3 L615.7 526.6 L614.7 529.8 L616.9 532.0 L617.5 534.2 L616.9 536.8 L619.3 539.1 L620.2 541.5 L611.6 544.4 L615.6 547.5 L614.7 550.0 L611.9 553.2 L616.3 556.2 L615.6 559.2 L617.1 561.3 L614.8 564.2 L619.5 567.6 L611.3 569.8 L614.5 572.7 L693.5 575.7 L614.7 578.7 L618.8 581.8 L617.3 584.6 L611.9 587.1 L619.0 589.2 L616.2 591.5 L614.9 593.9 L618.9 596.7 L615.7 599.3 L615.6 602.2 L615.4 605.5 L619.6 608.7 L611.6 612.1 L618.2 614.6 L613.5 617.8 L615.4 620.4 L616.6 623.4 L615.8 625.7 L612.7 627.8 L618.4 630.4 L615.8 633.2 L612.6 635.6 L615.9 638.5 L607.5 640.8 L616.7 643.6 L617.0 646.3 L616.9 648.9 L616.8 652.2 L615.7 655.1 L618.3 657.2 L612.9 659.8 L613.1 661.8 L619.1 664.4 L614.9 667.4 L614.6 670.4 L616.7 672.6 L614.1 674.7 L616.3 677.4 L613.2 679.6 L611.2 682.2 L614.7 685.1 L617.5 688.0 L627.0 690.8 L614.9 693.1 L614.3 696.5 L613.3 698.9 L617.6 701.7 L618.7 704.1 L615.1 706.1 L618.3 708.9 L616.9 711.1 L614.3 714.4 L618.4 716.6 L613.1 720.0 L610.4 723.1 L617.5 725.2 L618.5 728.2 L613.1 731.1 L616.0 733.5 L616.4 736.9 L611.0 740.1 L616.9 743.1 L617.5 745.2 L667.7 747.5 L616.4 749.6 L618.4 751.8 L614.8 753.8 L615.8 756.8 L617.2 759.6 L610.5 762.5 L614.3 765.6 L615.3 768.5 L612.2 771.7 L612.5 774.9 L616.3 777.4 L614.8 780.2 L617.1 782.5 L612.8 785.6 L613.1 787.8" stroke="#46e08a" stroke-width="1.25"/>
<path d="M735.0 138.5 L680.0 140.5 L716.0 142.5 L686.0 146.0 L725.0 148.0 L754.0 152.0 L740.0 155.0 L728.0 159.0 L756.6 163.0 L734.0 168.0 L751.7 169.8 L725.0 174.0 L703.0 178.0 L695.7 180.0 L710.0 183.0 L717.6 186.8 L666.5 190.4 L727.0 192.5 L757.4 197.4 L729.0 202.0 L711.0 208.0 L662.0 212.0 L626.7 215.0 L592.6 219.0 L646.0 220.0 L628.0 222.0 L660.8 223.4 L614.0 226.5 L662.0 228.0 L578.0 230.0 L613.0 233.0 L589.0 235.5 L625.0 238.0 L660.8 240.0 L626.0 242.0 L643.0 246.0 L621.8 247.7 L656.0 251.8 L591.8 255.3 L669.0 258.3 L630.0 261.5 L598.0 264.8 L670.5 268.0 L579.6 272.5 L625.0 276.0 L612.0 280.0 L605.6 283.4 L623.5 288.3 L607.0 294.8 L639.7 298.9 L639.0 299.0 L620.0 302.3 L618.0 304.4 L617.6 307.0 L615.4 309.2 L615.6 311.8 L614.3 314.5 L618.7 316.6 L617.4 319.2 L616.4 322.2 L619.1 324.3 L618.3 327.1 L620.3 330.0 L618.9 332.5 L617.7 335.0 L616.0 337.9 L617.0 340.1 L617.7 343.1 L618.0 345.7 L615.1 347.9 L619.1 350.4 L614.6 352.7 L633.0 354.8 L617.5 357.2 L615.9 360.3 L603.0 362.9 L618.7 365.3 L615.4 368.1 L618.7 370.2 L619.0 373.2 L617.2 375.5 L617.5 378.8 L614.7 382.1 L614.0 385.5 L613.7 388.1 L618.0 391.2 L618.7 394.6 L617.0 397.9 L618.3 401.3 L619.7 403.8 L614.7 406.3 L616.4 408.4 L619.4 410.7 L614.8 414.0 L616.7 416.2 L616.8 418.4 L614.9 421.5 L619.1 424.1 L615.5 426.8 L618.5 430.0 L617.6 433.3 L617.6 435.8 L617.3 439.0 L615.1 441.3 L618.1 443.9 L616.6 446.7 L613.8 449.8 L615.2 452.7 L618.4 455.5 L619.1 457.9 L616.6 460.0 L614.5 462.7 L616.0 465.5 L617.5 468.1 L606.0 470.1 L613.8 473.2 L614.2 476.5 L614.0 479.4 L615.5 482.0 L617.3 484.2 L617.2 486.8 L616.3 489.6 L614.7 492.3 L613.3 495.6 L618.2 498.8 L617.7 501.5 L616.5 504.4 L614.7 506.9 L614.6 509.3 L614.8 512.7 L615.3 515.2 L615.6 518.4 L629.0 521.1 L613.1 523.5 L614.2 525.8 L615.7 529.0 L615.4 531.2 L616.0 533.4 L617.9 536.0 L617.8 538.3 L618.7 540.7 L612.6 543.6 L614.1 546.7 L613.2 549.2 L612.9 552.4 L614.8 555.4 L614.1 558.4 L618.1 560.5 L613.3 563.4 L618.0 566.8 L612.3 569.0 L613.0 571.9 L692.0 574.9 L615.7 577.9 L617.3 581.0 L615.8 583.8 L612.9 586.3 L617.5 588.4 L614.7 590.7 L615.9 593.1 L617.4 595.9 L614.2 598.5 L616.6 601.4 L613.9 604.7 L618.1 607.9 L612.6 611.3 L616.7 613.8 L612.0 617.0 L616.4 619.6 L615.1 622.6 L614.3 624.9 L613.7 627.0 L616.9 629.6 L614.3 632.4 L613.6 634.8 L614.4 637.7 L606.0 640.0 L617.7 642.8 L615.5 645.5 L615.4 648.1 L617.8 651.4 L614.2 654.3 L616.8 656.4 L613.9 659.0 L611.6 661.0 L617.6 663.6 L615.9 666.6 L613.1 669.6 L615.2 671.8 L615.1 673.9 L614.8 676.6 L611.7 678.8 L612.2 681.4 L613.2 684.3 L616.0 687.2 L628.0 690.0 L613.4 692.3 L612.8 695.7 L614.3 698.1 L616.1 700.9 L617.2 703.3 L616.1 705.3 L616.8 708.1 L615.4 710.3 L615.3 713.6 L616.9 715.8 L611.6 719.2 L611.4 722.3 L616.0 724.4 L617.0 727.4 L614.1 730.3 L614.5 732.7 L614.9 736.1 L612.0 739.3 L615.4 742.3 L616.0 744.4 L668.7 746.7 L614.9 748.8 L616.9 751.0 L615.8 753.0 L614.3 756.0 L615.7 758.8 L611.5 761.7 L612.8 764.8 L613.8 767.7 L613.2 770.9 L611.0 774.1 L614.8 776.6 L615.8 779.4 L615.6 781.7 L611.3 784.8 L614.1 787.0" stroke="#7fd0ea" stroke-width="1.45"/>
<path d="M715.7 139.7 L716.9 142.8 L717.4 146.0 L726.7 149.3 L735.7 152.7 L739.7 155.8 L744.4 159.0 L747.2 162.8 L748.2 166.5 L737.4 169.8 L727.6 173.0 L711.0 178.7 L711.4 181.8 L711.0 185.0 L714.5 188.0 L717.2 191.0 L723.5 194.2 L729.4 197.4 L727.0 202.0 L695.3 206.0 L654.2 210.0 L629.5 214.4 L624.3 218.5 L628.1 222.5 L621.3 225.8 L614.4 229.0 L620.4 232.2 L625.0 235.5 L630.8 238.8 L636.5 242.0 L632.3 246.0 L628.5 250.0 L622.4 253.3 L617.4 256.6 L629.9 261.5 L633.5 266.0 L622.2 269.0 L610.0 272.0 L616.6 275.5 L623.2 279.0 L624.1 283.2 L623.4 287.5 L620.4 290.8 L616.8 294.0 L620.0 299.0 L618.5 299.0 L619.8 302.7 L618.3 306.3 L617.8 310.0 L616.4 314.9 L616.9 318.8 L620.3 322.5 L618.6 326.2 L619.1 330.0 L616.6 333.9 L617.6 337.8 L618.2 342.3 L618.7 345.7 L617.9 349.3 L617.5 352.8 L617.9 357.3 L618.9 361.8 L618.4 366.0 L618.3 369.8 L615.9 374.4 L617.1 379.2 L616.1 382.5 L615.7 386.2 L617.2 390.0 L617.4 394.3 L618.2 399.2 L619.1 402.8 L619.5 407.2 L619.4 411.7 L616.4 415.1 L615.2 420.0 L619.1 424.9 L615.7 428.2 L619.3 433.0 L618.2 437.7 L616.3 442.3 L617.7 445.3 L619.1 450.0 L614.9 454.1 L616.8 457.4 L614.9 460.9 L617.0 464.3 L615.2 467.5 L614.9 470.8 L618.5 475.4 L617.5 478.8 L615.7 483.6 L618.5 487.2 L617.3 491.8 L617.0 496.3 L617.5 500.0 L614.7 504.5 L615.7 508.2 L615.7 513.0 L616.3 517.3 L616.5 521.1 L617.2 525.9 L614.9 529.6 L616.3 533.3 L618.6 537.6 L618.3 541.3 L616.1 546.1 L615.1 549.5 L614.8 554.4 L616.9 558.7 L614.1 562.0 L614.2 566.3 L620.3 570.4 L619.9 574.3 L625.0 577.5 L619.9 581.2 L616.5 585.6 L614.2 590.0 L617.8 593.5 L615.3 596.5 L614.7 601.2 L616.5 604.6 L615.1 608.1 L614.9 611.9 L616.8 616.2 L617.8 620.7 L614.6 623.9 L617.0 628.8 L614.4 633.4 L614.6 636.6 L616.7 641.4 L616.2 645.1 L614.6 649.6 L616.8 652.8 L616.8 657.2 L614.8 661.7 L614.8 666.0 L613.7 670.8 L614.6 675.2 L616.6 680.0 L613.1 683.4 L617.2 686.9 L616.1 691.4 L613.9 694.8 L615.2 698.7 L613.1 702.9 L613.9 707.6 L614.2 712.1 L616.6 715.7 L615.0 719.1 L616.3 723.8 L613.7 728.3 L614.7 732.5 L616.0 736.1 L616.5 740.5 L613.2 744.3 L615.8 747.9 L615.3 752.3 L615.0 756.1 L612.8 759.2 L612.9 763.8 L613.7 768.1 L615.8 771.4 L613.7 776.2 L614.3 779.5 L616.5 782.7 L614.4 785.8 L612.2 789.1" stroke="#ffffff" stroke-width="1.35"/>
</g>
<path d="M882 230.5H888" stroke="#8893b0" stroke-width="1"/>
<g clip-path="url(#cCH)" fill="none" stroke-linejoin="round">
<path d="M1262 441.3H1391" stroke="#c22a38" stroke-width="1.2" stroke-opacity="0.85"/><path d="M1262 458.5H1391" stroke="#c22a38" stroke-width="1.2" stroke-opacity="0.6"/>
<path d="M972 441H1020" stroke="#ff9a22" stroke-width="1.6"/>
<path d="M935.7 138.7 L933.1 143.1 L930.5 147.4 L934.0 150.7 L936.0 154.0 L938.7 157.3 L939.4 160.5 L940.0 163.7 L941.4 166.9 L942.0 170.1 L943.2 173.3 L943.9 176.5 L945.1 179.7 L945.3 183.2 L945.6 186.6 L946.3 190.1 L947.9 193.5 L947.8 197.0 L948.5 200.2 L948.5 203.5 L947.7 206.7 L948.7 209.9 L947.6 213.2 L948.8 216.4 L948.8 219.6 L947.9 222.8 L948.6 226.1 L948.6 229.3 L942.3 232.6 L937.7 236.0 L931.5 239.3 L932.0 242.6 L931.1 245.9 L930.9 249.2 L929.0 252.4 L928.7 255.7 L928.6 259.0 L926.9 262.3 L924.7 265.7 L924.0 269.0 L923.2 272.3 L921.6 275.7 L920.5 279.0 L922.5 282.1 L923.4 285.2 L925.0 288.3 L926.0 291.4 L926.5 294.5 L926.5 297.6 L927.3 300.7 L928.3 303.8 L929.3 306.9 L929.5 310.0 L930.6 313.1 L931.0 316.2 L932.1 319.4 L932.4 322.5 L932.5 325.6 L932.9 328.7 L933.1 331.9 L933.4 335.2 L934.8 338.4 L935.2 341.7 L935.3 344.9 L934.7 348.2 L935.8 351.4 L935.4 354.7 L931.5 357.9 L926.2 361.0 L925.8 364.5 L925.2 367.9 L924.4 371.4 L924.5 374.8 L924.1 378.3 L924.0 381.5 L925.1 384.8 L926.3 388.0 L926.0 391.1 L925.3 394.3 L925.1 397.4 L925.5 400.6 L924.3 403.7 L923.9 406.9 L924.3 410.0 L923.9 413.3 L925.1 416.7 L924.5 420.0 L925.6 423.3 L925.1 426.7 L926.0 430.0 L925.9 434.3 L925.9 438.6 L920.6 440.6 L892.5 440.6 L879.3 441.0 L879.6 444.5 L880.2 448.0 L879.4 451.5 L879.6 455.0 L880.1 458.5 L892.5 458.5 L902.1 458.8 L905.5 462.4 L909.7 465.9 L912.5 469.5 L916.4 472.5 L918.6 475.6 L921.5 478.6 L924.1 481.6 L926.7 484.7 L930.2 487.7 L931.3 491.0 L932.4 494.3 L932.5 497.6 L934.5 501.0 L936.2 504.3 L937.0 507.6 L936.9 510.8 L937.2 514.0 L936.7 517.1 L937.6 520.3 L937.8 523.5 L936.9 526.6 L937.6 529.8 L937.8 533.0 L940.6 536.6 L944.3 540.3 L946.1 543.6 L947.5 546.8 L948.1 550.1 L949.4 553.3 L951.8 556.6 L951.7 560.2 L952.2 563.8 L952.5 567.4 L951.9 571.0 L951.2 574.9 L949.7 578.7 L950.2 582.1 L949.9 585.6 L949.1 589.0 L950.1 592.3 L950.8 595.7 L950.9 599.0 L951.4 602.3 L952.4 605.7 L952.4 609.0 L952.8 612.3 L953.3 615.7 L953.0 619.0 L951.7 622.3 L952.6 625.7 L952.3 629.0 L951.8 632.2 L950.3 635.4 L950.9 638.6 L949.6 641.8 L949.9 645.0 L948.4 648.0 L947.6 651.0 L946.4 654.0 L946.5 657.0 L945.9 660.0 L947.1 663.0 L946.9 666.0 L946.6 669.0 L947.6 672.0 L947.7 675.0 L947.3 678.0 L948.7 681.0 L948.2 684.0 L947.9 687.1 L949.1 690.2 L949.1 693.4 L948.7 696.5 L948.5 699.6 L949.1 702.8 L949.3 705.9 L949.5 709.0 L949.3 712.1 L949.5 715.2 L949.8 718.4 L949.2 721.5 L949.3 724.6 L949.8 727.8 L950.3 730.9 L950.4 734.0 L950.7 737.1 L950.3 740.2 L950.9 743.3 L950.2 746.4 L950.8 749.6 L950.6 752.7 L951.8 755.8 L952.3 758.9 L952.0 762.0 L952.3 765.1 L952.0 768.2 L952.7 771.3 L951.9 774.4 L952.5 777.6 L952.7 780.7 L953.6 783.8 L952.8 786.9 L953.5 790.0" stroke="#ee1418" stroke-width="1.7"/>
<path d="M1009.0 138.5 L1015.0 147.4 L1008.0 151.0 L1024.0 156.0 L1019.0 162.0 L1026.5 167.0 L1006.6 172.0 L1027.8 177.0 L1029.0 189.6 L1017.8 195.8 L1036.4 202.0 L1039.0 217.0 L1031.5 231.8 L1021.5 239.3 L975.6 243.0 L1011.0 244.5 L975.8 247.2 L1014.0 249.0 L989.4 250.9 L1014.8 253.6 L962.0 257.2 L1004.0 259.0 L991.0 262.7 L944.0 269.0 L984.0 267.2 L987.6 272.7 L932.0 277.2 L980.3 275.4 L940.4 279.9 L993.0 282.6 L956.7 286.3 L1004.0 289.0 L956.7 293.5 L996.6 293.5 L985.8 297.2 L1009.4 301.7 L991.2 306.2 L1014.0 309.0 L998.5 313.5 L1007.5 316.2 L1000.3 319.0 L1007.5 321.7" stroke="#ff2fe0" stroke-width="1.6"/>
<path d="M1004.0 329.0 L1020.2 329.5 L1008.0 336.0 L1021.0 340.0 L1007.5 344.0 L1021.0 350.7 L1000.0 353.5 L991.0 355.3 L993.0 357.0 L957.6 360.7 L1004.0 361.6 L969.4 365.2 L1002.0 369.8 L971.2 374.3 L1004.0 375.2 L989.4 380.7 L958.5 383.4 L988.5 386.1 L936.7 389.7 L999.4 394.3 L998.5 404.3 L992.0 407.0 L1004.0 405.2 L993.0 409.7 L1015.7 413.3" stroke="#ff2fe0" stroke-width="1.6"/>
<path d="M1002.0 468.6 L994.0 473.0 L960.3 474.0 L993.0 477.7 L967.6 482.2 L999.4 483.1 L964.0 485.0 L1004.0 489.5 L946.7 494.0 L974.9 496.7 L958.5 502.2 L982.1 507.6 L948.5 508.5" stroke="#ff2fe0" stroke-width="1.6"/>
<path d="M1011.6 547.6 L1005.1 553.0 L995.2 558.5 L1011.2 565.7 L1021.6 573.0 L1010.6 579.9 L1003.4 585.7 L1009.8 593.0 L1016.0 600.2 L1018.8 604.8 L1026.4 609.3 L1031.1 616.6 L1023.2 621.1 L1014.4 625.6 L1018.9 630.2 L1020.7 634.7 L1017.3 639.2 L1013.5 643.8 L1003.7 650.5" stroke="#ff2fe0" stroke-width="1.6"/>
<path d="M980.0 670.6 L1000.0 666.0 L990.0 673.0 L1013.7 679.0 L977.0 684.0" stroke="#ff2fe0" stroke-width="1.6"/>
<path d="M915 695.7H975M925 699l12 2l-6 3M952 733.4H997M988.6 764l10 8.5M1000 788l14 3" stroke="#ff2fe0" stroke-width="1.6"/>
<path d="M1071.0 138.7 L1068.2 141.8 L1066.0 144.9 L1061.4 148.0 L1066.4 151.5 L1072.6 155.0 L1072.7 158.0 L1073.0 161.0 L1073.9 164.0 L1074.5 167.0 L1074.9 170.2 L1077.3 173.3 L1079.0 176.5 L1079.3 179.7 L1080.2 182.6 L1080.3 185.5 L1081.6 188.3 L1081.8 191.2 L1084.7 194.1 L1084.3 197.0 L1084.5 200.0 L1086.9 203.0 L1085.1 206.0 L1087.3 209.0 L1086.4 212.0 L1087.2 215.0 L1087.1 218.0 L1086.0 221.0 L1088.1 224.0 L1085.0 226.9 L1083.9 229.8 L1081.4 232.6 L1079.6 235.5 L1071.6 238.8 L1061.4 242.0 L1061.8 244.8 L1062.5 247.7 L1062.1 250.5 L1059.4 253.3 L1057.6 256.2 L1057.5 259.0 L1053.3 262.0 L1050.4 265.0 L1048.4 268.0 L1046.4 271.0 L1042.5 274.0 L1045.6 277.3 L1047.1 280.7 L1048.7 284.0 L1048.9 286.8 L1050.7 289.7 L1050.9 292.5 L1053.8 295.3 L1054.7 298.1 L1055.7 301.0 L1056.0 303.8 L1059.3 306.8 L1058.9 309.8 L1059.9 312.7 L1061.9 315.7 L1065.1 318.7 L1062.9 321.6 L1065.0 324.5 L1065.8 327.4 L1065.7 330.2 L1064.7 333.1 L1064.8 336.0 L1066.4 339.1 L1066.2 342.2 L1066.7 345.4 L1065.0 348.5 L1063.8 352.2 L1061.8 356.0 L1054.8 358.9 L1049.4 361.8 L1046.1 364.7 L1045.8 367.8 L1045.9 370.8 L1046.8 373.9 L1046.6 376.9 L1047.2 380.0 L1047.3 382.9 L1048.8 385.7 L1048.6 388.6 L1051.6 391.4 L1052.3 394.3 L1051.7 397.1 L1050.7 400.0 L1051.2 402.9 L1048.6 405.7 L1048.2 408.6 L1046.2 411.4 L1046.3 414.3 L1043.8 417.1 L1043.3 420.0 L1044.0 422.9 L1045.6 425.7 L1047.9 428.6 L1047.7 431.4 L1049.2 434.3 L1049.9 437.1 L1050.1 440.0 L1049.0 442.7 L1049.3 445.5 L1049.9 448.2 L1051.5 450.9 L1051.3 453.6 L1053.6 456.4 L1051.6 459.1 L1051.7 461.8 L1053.7 464.5 L1054.0 467.3 L1052.6 470.0 L1053.0 472.7 L1052.7 475.5 L1053.4 478.2 L1052.7 480.9 L1052.5 483.6 L1050.8 486.4 L1051.6 489.1 L1049.5 491.8 L1048.4 494.5 L1047.4 497.3 L1049.1 500.0 L1049.1 502.7 L1049.6 505.5 L1051.4 508.2 L1051.0 510.9 L1050.6 513.6 L1052.4 516.4 L1053.8 519.1 L1052.1 521.8 L1055.1 524.5 L1054.1 527.3 L1053.8 530.0 L1055.5 532.7 L1056.8 535.5 L1056.3 538.2 L1056.1 540.9 L1058.1 543.6 L1056.5 546.4 L1058.7 549.1 L1058.2 551.8 L1059.5 554.5 L1059.6 557.3 L1059.3 560.0 L1059.5 562.8 L1061.8 565.6 L1061.1 568.4 L1060.9 571.3 L1062.3 574.1 L1063.3 576.9 L1062.8 579.7" stroke="#ff9a22" stroke-width="1.6"/>
<path d="M1064.2 579.7 L1061.5 583.1 L1063.8 586.6 L1061.2 590.0 L1064.1 592.8 L1067.8 595.7 L1068.3 598.5 L1071.0 601.3 L1072.2 604.2 L1077.0 607.0 L1076.7 609.7 L1073.8 612.4 L1073.3 615.1 L1074.1 617.8 L1074.0 620.5 L1073.8 623.4 L1071.4 626.2 L1071.2 629.1 L1068.9 631.9 L1068.1 634.8 L1066.6 637.6 L1067.1 640.5 L1065.0 643.8 L1063.0 647.2 L1061.9 650.5 L1039.4 655.5 L1042.9 658.4 L1046.8 661.2 L1051.8 664.1 L1053.2 667.0 L1053.1 669.8 L1053.6 672.7 L1054.4 675.5 L1053.1 678.3 L1052.8 681.2 L1054.5 684.0 L1052.0 686.6 L1050.1 689.2 L1046.2 691.8 L1045.0 694.4 L1042.5 697.0 L1042.8 699.9 L1044.0 702.7 L1043.7 705.6 L1042.7 708.4 L1040.7 711.3 L1040.8 714.1 L1041.3 717.0 L1043.0 720.5 L1046.7 724.0 L1046.3 726.6 L1043.7 729.2 L1042.7 731.8 L1041.0 734.4 L1041.0 737.0 L1042.2 739.8 L1042.9 742.5 L1044.8 745.3 L1048.9 748.0 L1049.3 750.8 L1049.9 753.6 L1047.4 756.4 L1047.2 759.1 L1045.5 761.9 L1045.4 764.7 L1042.6 767.5 L1044.8 770.3 L1046.8 773.1 L1046.8 775.9 L1050.4 778.8 L1051.6 781.6 L1052.8 784.4 L1053.9 787.2 L1053.8 790.0" stroke="#ff9a22" stroke-width="1.6"/>
<path d="M1075.8 138.7 L1069.6 141.6 L1065.8 144.5 L1058.7 147.4 L1069.7 151.0 L1072.8 153.8 L1071.6 156.7 L1073.0 159.5 L1073.6 162.3 L1079.1 167.0 L1080.4 170.2 L1080.2 173.3 L1079.5 176.5 L1082.1 179.7 L1083.4 182.8 L1083.0 185.8 L1084.0 188.9 L1086.6 192.0 L1090.0 195.3 L1092.4 198.7 L1094.8 202.0 L1093.0 205.3 L1090.2 208.7 L1090.2 212.0 L1090.8 215.3 L1092.8 218.7 L1093.6 222.0 L1091.0 225.3 L1091.5 228.5 L1087.1 231.8 L1083.1 234.9 L1078.2 238.0 L1065.3 243.0 L1061.9 245.7 L1062.8 248.3 L1063.3 251.0 L1061.6 253.7 L1062.0 256.3 L1059.7 259.0 L1056.8 261.9 L1053.6 264.9 L1050.6 267.8 L1047.5 270.9 L1043.6 274.0 L1048.6 277.3 L1049.7 280.7 L1051.6 284.0 L1052.0 287.3 L1051.9 290.7 L1052.9 294.0 L1057.7 297.3 L1059.6 300.5 L1060.9 303.8 L1062.6 306.8 L1064.1 309.8 L1061.9 312.7 L1063.8 315.7 L1064.7 318.7 L1065.5 321.6 L1067.1 324.5 L1067.3 327.4 L1067.8 330.2 L1071.2 333.1 L1070.8 336.0 L1072.3 339.1 L1070.6 342.2 L1071.5 345.4 L1072.5 348.5 L1066.7 352.2 L1063.5 356.0 L1057.0 359.3 L1051.9 362.7 L1045.7 366.0 L1048.4 368.8 L1048.7 371.6 L1049.0 374.4 L1051.2 377.2 L1051.9 380.0 L1052.0 382.9 L1054.6 385.7 L1054.8 388.6 L1053.9 391.4 L1056.4 394.3 L1056.8 397.1 L1056.7 400.0 L1058.4 402.9 L1056.1 405.7 L1056.1 408.6 L1053.4 411.4 L1052.1 414.3 L1050.0 417.1 L1050.5 420.0 L1050.8 422.9 L1050.7 425.7 L1053.7 428.6 L1053.7 431.4 L1053.0 434.3 L1056.7 437.1 L1055.7 440.0 L1057.9 442.7 L1056.8 445.5 L1056.2 448.2 L1058.3 450.9 L1058.4 453.6 L1060.2 456.4 L1059.8 459.1 L1059.9 461.8 L1060.6 464.5 L1061.4 467.3 L1062.7 470.0 L1062.3 472.7 L1060.4 475.5 L1058.9 478.2 L1057.9 480.9 L1059.1 483.6 L1057.3 486.4 L1058.7 489.1 L1056.7 491.8 L1057.7 494.5 L1054.3 497.3 L1056.1 500.0 L1054.6 502.7 L1055.8 505.5 L1057.2 508.2 L1057.6 510.9 L1058.9 513.6 L1059.9 516.4 L1061.1 519.1 L1060.0 521.8 L1062.7 524.5 L1062.8 527.3 L1064.4 530.0 L1064.1 532.7 L1066.5 535.5 L1065.3 538.2 L1065.6 540.9 L1068.4 543.6 L1068.8 546.4 L1068.1 549.1 L1069.3 551.8 L1070.3 554.5 L1070.3 557.3 L1072.2 560.0 L1072.3 562.8 L1073.4 565.6 L1074.6 568.4 L1073.3 571.3 L1074.1 574.1 L1076.0 576.9 L1076.0 579.7" stroke="#fff12a" stroke-width="1.6"/>
<path d="M1075.9 579.7 L1074.6 583.1 L1072.0 586.6 L1071.8 590.0 L1071.7 592.8 L1077.6 595.7 L1079.4 598.5 L1082.5 601.3 L1085.2 604.2 L1086.0 607.0 L1087.7 609.7 L1086.9 612.4 L1085.0 615.1 L1087.0 617.8 L1085.3 620.5 L1085.0 623.4 L1081.7 626.2 L1082.4 629.1 L1079.1 631.9 L1078.0 634.8 L1077.0 637.6 L1075.5 640.5 L1075.1 643.8 L1071.8 647.2 L1069.5 650.5 L1058.2 653.8 L1044.7 657.0 L1049.0 660.3 L1054.0 663.7 L1061.3 667.0 L1061.2 669.8 L1061.1 672.7 L1061.5 675.5 L1062.3 678.3 L1063.2 681.2 L1062.8 684.0 L1059.5 686.6 L1058.4 689.2 L1054.9 691.8 L1051.7 694.4 L1049.8 697.0 L1048.9 699.7 L1047.2 702.3 L1042.5 705.0 L1042.9 707.7 L1039.1 710.4 L1038.7 713.0 L1036.6 715.7 L1043.1 718.5 L1052.6 721.2 L1060.7 724.0 L1057.4 727.3 L1057.5 730.7 L1054.3 734.0 L1057.4 736.8 L1057.1 739.6 L1059.6 742.4 L1063.9 745.2 L1064.2 748.0 L1066.6 750.8 L1065.7 753.6 L1067.0 756.4 L1064.8 759.1 L1063.7 761.9 L1063.1 764.7 L1065.1 767.5 L1063.4 770.3 L1064.8 773.1 L1066.3 775.9 L1068.1 778.8 L1070.0 781.6 L1071.5 784.4 L1070.9 787.2 L1072.0 790.0" stroke="#fff12a" stroke-width="1.6"/>
<path d="M1090.7 138.7 L1085.0 141.6 L1081.4 144.5 L1074.8 147.4 L1086.1 151.0 L1088.7 153.8 L1090.5 156.7 L1093.9 159.5 L1097.3 162.3 L1095.9 165.4 L1098.7 168.5 L1099.0 171.6 L1101.5 174.7 L1102.4 177.7 L1101.5 180.7 L1102.8 183.6 L1105.1 186.6 L1107.1 189.6 L1109.1 192.7 L1111.4 195.8 L1111.4 198.9 L1114.2 202.0 L1114.4 205.0 L1113.2 208.0 L1112.2 211.0 L1113.9 214.0 L1112.4 217.0 L1112.1 220.3 L1112.9 223.5 L1114.0 226.8 L1110.9 230.1 L1107.7 233.5 L1103.0 236.8 L1092.6 240.4 L1079.5 244.0 L1076.4 247.0 L1074.6 250.0 L1073.9 253.0 L1071.8 256.0 L1072.2 259.0 L1065.4 262.3 L1063.9 265.7 L1057.7 269.0 L1058.1 272.3 L1055.3 275.7 L1052.6 279.0 L1057.8 282.3 L1058.3 285.7 L1062.5 289.0 L1063.0 292.0 L1065.2 294.9 L1068.8 297.9 L1070.2 300.8 L1073.9 303.8 L1076.3 306.8 L1078.1 309.8 L1078.1 312.7 L1082.2 315.7 L1082.9 318.7 L1084.7 321.6 L1087.2 324.5 L1088.5 327.4 L1087.4 330.2 L1088.5 333.1 L1091.8 336.0 L1091.4 339.1 L1093.0 342.2 L1093.4 345.4 L1095.2 348.5 L1089.8 352.2 L1085.2 356.0 L1075.0 359.3 L1064.0 362.7 L1053.5 366.0 L1055.0 368.7 L1059.5 371.4 L1060.7 374.1 L1063.0 376.9 L1064.7 379.6 L1067.1 382.3 L1070.0 385.0 L1071.6 387.8 L1071.6 390.6 L1072.2 393.3 L1074.7 396.1 L1077.0 398.9 L1076.9 401.7 L1079.3 404.4 L1077.9 407.2 L1080.9 410.0 L1079.4 412.7 L1077.0 415.5 L1076.8 418.2 L1077.8 420.9 L1077.4 423.6 L1074.5 426.4 L1075.5 429.1 L1075.4 431.8 L1072.6 434.5 L1073.8 437.3 L1070.9 440.0 L1072.0 442.7 L1075.3 445.5 L1076.8 448.2 L1077.4 450.9 L1077.9 453.6 L1079.6 456.4 L1080.5 459.1 L1081.8 461.8 L1084.0 464.5 L1083.7 467.3 L1084.3 470.0 L1083.5 472.7 L1083.8 475.5 L1083.9 478.2 L1082.1 480.9 L1081.1 483.6 L1080.1 486.4 L1081.3 489.1 L1078.3 491.8 L1078.8 494.5 L1077.6 497.3 L1078.7 500.0 L1079.7 502.7 L1080.4 505.5 L1079.4 508.2 L1080.9 510.9 L1081.8 513.6 L1084.8 516.4 L1085.8 519.1 L1086.2 521.8 L1086.4 524.5 L1086.8 527.3 L1088.3 530.0 L1088.9 532.7 L1089.1 535.5 L1089.2 538.2 L1089.5 540.9 L1090.9 543.6 L1091.3 546.4 L1093.8 549.1 L1094.8 551.8 L1093.5 554.5 L1096.5 557.3 L1096.9 560.0 L1096.2 562.8 L1098.1 565.6 L1097.9 568.4 L1099.1 571.3 L1100.1 574.1 L1101.3 576.9 L1100.6 579.7" stroke="#1a2cf0" stroke-width="1.9"/>
<path d="M1099.2 579.7 L1098.2 583.1 L1095.4 586.6 L1093.8 590.0 L1096.0 592.8 L1100.7 595.7 L1102.5 598.5 L1105.8 601.3 L1109.2 604.2 L1110.6 607.0 L1110.5 609.7 L1109.4 612.4 L1111.5 615.1 L1109.2 617.8 L1110.2 620.5 L1107.9 623.2 L1108.0 626.0 L1105.5 628.8 L1103.9 631.5 L1102.4 634.2 L1101.7 637.0 L1101.4 639.7 L1098.7 642.4 L1099.7 645.1 L1098.4 647.8 L1097.6 650.5 L1083.5 653.8 L1066.1 657.0 L1070.9 660.3 L1075.9 663.7 L1079.9 667.0 L1080.4 669.8 L1080.7 672.7 L1083.5 675.5 L1084.3 678.3 L1084.5 681.2 L1084.8 684.0 L1080.9 686.6 L1077.9 689.2 L1075.6 691.8 L1071.6 694.4 L1069.3 697.0 L1068.0 699.7 L1065.5 702.3 L1063.8 705.0 L1061.2 707.7 L1057.3 710.4 L1057.3 713.0 L1053.6 715.7 L1062.6 718.5 L1071.2 721.2 L1080.1 724.0 L1078.5 727.3 L1075.3 730.7 L1069.5 734.0 L1074.5 736.6 L1076.9 739.2 L1079.6 741.8 L1080.5 744.4 L1085.2 747.0 L1085.1 749.9 L1085.7 752.9 L1085.3 755.8 L1087.8 758.7 L1087.6 761.6 L1089.0 764.6 L1091.8 767.5 L1090.5 770.3 L1092.4 773.1 L1091.4 775.9 L1091.0 778.8 L1092.3 781.6 L1092.0 784.4 L1092.4 787.2 L1093.9 790.0" stroke="#1a2cf0" stroke-width="1.9"/>
<path d="M1226.9 138.7 L1228.1 140.8 L1226.9 142.9 L1222.3 145.0 L1204.8 147.0 L1211.1 149.0 L1220.6 151.0 L1224.4 153.3 L1223.7 155.5 L1225.4 157.8 L1228.6 160.0 L1230.5 162.3 L1231.0 164.7 L1228.3 167.0 L1229.4 169.1 L1231.6 171.1 L1233.3 173.2 L1236.8 175.2 L1234.0 177.2 L1238.2 179.3 L1240.6 181.3 L1241.1 183.4 L1239.4 185.5 L1240.4 187.5 L1242.3 189.6 L1241.6 191.7 L1247.0 193.7 L1247.1 195.8 L1248.3 197.9 L1248.5 199.9 L1251.0 202.0 L1247.3 204.0 L1244.7 206.0 L1245.1 208.0 L1244.5 210.0 L1245.2 212.0 L1242.5 214.1 L1247.5 216.1 L1246.2 218.2 L1245.8 220.3 L1249.5 222.3 L1251.7 224.4 L1248.6 226.9 L1247.4 229.4 L1244.2 231.8 L1242.1 234.3 L1229.8 236.5 L1223.2 238.7 L1211.2 240.8 L1198.6 243.0 L1197.6 245.2 L1198.0 247.4 L1197.4 249.6 L1197.3 251.8 L1193.7 254.0 L1193.9 256.5 L1194.2 259.1 L1191.0 261.6 L1187.6 264.1 L1177.5 266.6 L1178.4 269.1 L1176.0 271.6 L1173.9 274.0 L1168.9 276.5 L1172.8 279.0 L1175.4 281.5 L1177.1 284.0 L1179.2 286.2 L1179.6 288.4 L1182.1 290.5 L1184.0 292.7 L1198.7 296.4 L1200.5 298.5 L1201.7 300.5 L1201.0 302.6 L1203.5 304.7 L1205.3 306.7 L1203.3 308.8 L1207.4 310.8 L1207.6 312.9 L1207.4 314.9 L1209.3 316.9 L1212.8 319.0 L1213.6 321.0 L1214.0 323.1 L1216.7 325.3 L1216.3 327.4 L1214.7 329.6 L1218.6 331.7 L1219.0 333.9 L1221.3 336.0 L1220.8 338.1 L1221.7 340.2 L1218.7 342.2 L1221.9 344.3 L1220.0 346.4 L1219.9 348.5 L1220.5 350.6 L1218.6 352.8 L1217.1 354.9 L1212.1 357.0 L1203.7 359.0 L1191.1 361.0 L1183.2 363.5 L1175.8 366.0 L1178.1 368.0 L1176.8 370.0 L1181.6 372.0 L1183.7 374.0 L1186.2 376.0 L1187.1 378.0 L1192.1 380.0 L1189.6 382.0 L1193.5 384.0 L1191.6 386.0 L1192.2 388.0 L1193.1 390.0 L1197.8 392.0 L1194.8 394.0 L1197.0 396.0 L1200.1 398.0 L1199.1 400.0 L1200.5 402.0 L1198.5 404.0 L1195.3 406.0 L1194.9 408.0 L1194.0 410.0 L1191.8 412.0 L1191.5 414.0 L1187.1 416.0 L1186.8 418.0 L1183.8 420.0 L1183.8 422.0 L1188.1 424.0 L1187.2 426.0 L1186.8 428.0 L1190.3 430.0 L1192.0 432.0 L1190.0 434.0 L1192.1 436.0 L1195.8 438.0 L1195.4 440.0 L1194.0 442.0 L1198.2 444.0 L1196.8 446.0 L1198.5 448.0 L1202.2 450.0 L1203.2 452.0 L1200.0 454.0 L1201.0 456.0 L1204.9 458.0 L1204.6 460.0 L1204.6 462.0 L1206.2 464.0 L1210.0 466.0 L1207.7 468.0 L1210.6 470.0 L1209.4 472.0 L1207.9 474.0 L1207.8 476.0 L1208.0 478.0 L1204.8 480.0 L1206.6 482.0 L1203.2 484.0 L1202.4 486.0 L1202.4 488.0 L1202.6 490.0 L1202.2 492.0 L1202.2 494.0 L1199.7 496.0 L1202.1 498.0 L1200.1 500.0 L1202.7 502.0 L1202.2 504.0 L1201.8 506.0 L1206.1 508.0 L1205.4 510.0 L1205.3 512.0 L1207.4 514.0 L1208.2 516.0 L1210.0 518.0 L1208.4 520.0 L1212.9 522.0 L1212.2 524.0 L1212.9 526.0 L1211.9 528.0 L1213.6 530.0 L1216.7 532.0 L1215.7 534.0 L1216.8 536.0 L1217.4 538.0 L1216.8 540.0 L1215.5 542.0 L1216.0 544.0 L1220.4 546.0 L1219.6 548.0 L1221.3 550.0 L1221.2 552.0 L1221.3 554.0 L1220.3 556.0 L1222.6 558.0 L1222.2 560.0 L1222.7 562.2 L1222.5 564.4 L1224.2 566.6 L1225.6 568.8 L1226.1 570.9 L1226.7 573.1 L1223.1 575.3 L1225.8 577.5 L1226.0 579.7" stroke="#ffffff" stroke-width="1.6"/>
<path d="M1227.1 579.7 L1219.5 582.4 L1210.1 585.0 L1213.3 587.1 L1212.1 589.2 L1216.7 591.2 L1218.5 593.3 L1220.1 595.4 L1225.3 597.5 L1225.3 599.5 L1230.7 601.6 L1230.4 603.7 L1231.4 605.8 L1232.7 607.9 L1232.9 610.0 L1229.7 612.1 L1233.1 614.2 L1230.4 616.3 L1231.7 618.4 L1230.7 620.5 L1232.0 622.6 L1229.0 624.6 L1228.0 626.7 L1228.4 628.8 L1226.9 630.8 L1226.3 632.9 L1225.2 634.9 L1224.9 637.0 L1225.3 639.2 L1225.2 641.5 L1222.9 643.8 L1222.6 646.0 L1221.9 648.2 L1220.3 650.5 L1202.2 653.0 L1179.1 655.5 L1185.2 657.7 L1185.5 659.8 L1189.1 662.0 L1191.2 664.1 L1190.8 666.3 L1194.8 668.4 L1197.0 670.6 L1195.2 672.8 L1197.4 675.1 L1195.4 677.3 L1195.9 679.5 L1192.5 681.8 L1196.0 684.0 L1190.8 686.2 L1190.0 688.3 L1187.0 690.5 L1181.1 692.7 L1181.4 694.8 L1178.5 697.0 L1179.9 699.0 L1180.8 701.0 L1179.4 703.0 L1181.9 705.0 L1184.7 707.0 L1178.0 709.0 L1175.2 711.0 L1172.3 713.0 L1169.4 715.0 L1167.0 717.0 L1173.6 719.3 L1183.1 721.7 L1192.4 724.0 L1189.2 726.2 L1192.0 728.3 L1190.6 730.5 L1194.6 732.7 L1193.8 734.8 L1192.9 737.0 L1198.8 739.0 L1199.4 741.0 L1203.4 743.0 L1209.2 745.0 L1211.7 747.0 L1211.3 749.1 L1207.2 751.2 L1207.3 753.4 L1208.8 755.5 L1208.7 757.6 L1205.0 759.8 L1203.9 761.9 L1204.4 764.0 L1204.4 766.0 L1205.7 768.0 L1207.5 770.0 L1208.8 772.0 L1206.0 774.0 L1207.5 776.0 L1209.0 778.0 L1208.2 780.0 L1212.0 782.0 L1210.3 784.0 L1213.9 786.0 L1212.5 788.0 L1214.0 790.0" stroke="#ffffff" stroke-width="1.6"/>
</g>
<rect x="1395.5" y="138.5" width="242.5" height="651.5" fill="url(#pShale)"/>
<rect x="1395.6" y="138.5" width="48.4" height="13.6" fill="url(#pSand)" shape-rendering="crispEdges"/>
<rect x="1444.0" y="138.5" width="59.4" height="13.6" fill="url(#pMarl)" shape-rendering="crispEdges"/>
<rect x="1565.1" y="138.5" width="72.9" height="13.6" fill="url(#pLime)" shape-rendering="crispEdges"/>
<rect x="1395.6" y="151.2" width="96.5" height="16.4" fill="url(#pSand)" shape-rendering="crispEdges"/>
<rect x="1492.0" y="151.2" width="60.1" height="16.4" fill="url(#pMarl)" shape-rendering="crispEdges"/>
<rect x="1587.9" y="151.2" width="50.1" height="16.4" fill="url(#pLime)" shape-rendering="crispEdges"/>
<rect x="1395.6" y="166.8" width="83.5" height="16.4" fill="url(#pSand)" shape-rendering="crispEdges"/>
<rect x="1479.1" y="166.8" width="73.1" height="16.4" fill="url(#pMarl)" shape-rendering="crispEdges"/>
<rect x="1600.9" y="166.8" width="37.1" height="16.4" fill="url(#pLime)" shape-rendering="crispEdges"/>
<rect x="1395.6" y="182.3" width="96.5" height="16.4" fill="url(#pSand)" shape-rendering="crispEdges"/>
<rect x="1492.0" y="182.3" width="60.1" height="16.4" fill="url(#pMarl)" shape-rendering="crispEdges"/>
<rect x="1587.9" y="182.3" width="50.1" height="16.4" fill="url(#pLime)" shape-rendering="crispEdges"/>
<rect x="1395.6" y="197.8" width="205.3" height="16.4" fill="url(#pSand)" shape-rendering="crispEdges"/>
<rect x="1612.2" y="197.8" width="25.8" height="16.4" fill="url(#pLime)" shape-rendering="crispEdges"/>
<rect x="1395.6" y="213.4" width="133.8" height="16.4" fill="url(#pSand)" shape-rendering="crispEdges"/>
<rect x="1529.4" y="213.4" width="22.7" height="16.4" fill="url(#pMarl)" shape-rendering="crispEdges"/>
<rect x="1587.9" y="213.4" width="50.1" height="16.4" fill="url(#pLime)" shape-rendering="crispEdges"/>
<rect x="1395.6" y="228.9" width="108.8" height="16.4" fill="url(#pSand)" shape-rendering="crispEdges"/>
<rect x="1504.4" y="228.9" width="36.4" height="16.4" fill="url(#pMarl)" shape-rendering="crispEdges"/>
<rect x="1576.5" y="228.9" width="61.5" height="16.4" fill="url(#pLime)" shape-rendering="crispEdges"/>
<rect x="1395.6" y="244.4" width="59.8" height="16.4" fill="url(#pSand)" shape-rendering="crispEdges"/>
<rect x="1455.3" y="244.4" width="36.7" height="16.4" fill="url(#pMarl)" shape-rendering="crispEdges"/>
<rect x="1576.5" y="244.4" width="61.5" height="16.4" fill="url(#pLime)" shape-rendering="crispEdges"/>
<rect x="1395.6" y="259.9" width="36.4" height="16.4" fill="url(#pSand)" shape-rendering="crispEdges"/>
<rect x="1623.6" y="259.9" width="14.4" height="16.4" fill="url(#pLime)" shape-rendering="crispEdges"/>
<rect x="1395.6" y="275.5" width="12.0" height="16.4" fill="url(#pSand)" shape-rendering="crispEdges"/>
<rect x="1623.6" y="275.5" width="14.4" height="16.4" fill="url(#pLime)" shape-rendering="crispEdges"/>
<rect x="1395.6" y="291.0" width="12.0" height="16.4" fill="url(#pSand)" shape-rendering="crispEdges"/>
<rect x="1623.6" y="291.0" width="14.4" height="16.4" fill="url(#pLime)" shape-rendering="crispEdges"/>
<rect x="1395.6" y="306.5" width="36.4" height="16.4" fill="url(#pSand)" shape-rendering="crispEdges"/>
<rect x="1623.6" y="306.5" width="14.4" height="16.4" fill="url(#pLime)" shape-rendering="crispEdges"/>
<rect x="1395.6" y="322.1" width="12.0" height="16.4" fill="url(#pSand)" shape-rendering="crispEdges"/>
<rect x="1623.6" y="322.1" width="14.4" height="16.4" fill="url(#pLime)" shape-rendering="crispEdges"/>
<rect x="1395.6" y="337.6" width="59.8" height="16.4" fill="url(#pSand)" shape-rendering="crispEdges"/>
<rect x="1623.6" y="337.6" width="14.4" height="16.4" fill="url(#pLime)" shape-rendering="crispEdges"/>
<rect x="1395.6" y="353.1" width="59.8" height="16.4" fill="url(#pSand)" shape-rendering="crispEdges"/>
<rect x="1623.6" y="353.1" width="14.4" height="16.4" fill="url(#pLime)" shape-rendering="crispEdges"/>
<rect x="1395.6" y="368.6" width="12.0" height="16.4" fill="url(#pSand)" shape-rendering="crispEdges"/>
<rect x="1395.6" y="384.2" width="12.0" height="16.4" fill="url(#pSand)" shape-rendering="crispEdges"/>
<rect x="1395.6" y="399.7" width="36.4" height="16.4" fill="url(#pSand)" shape-rendering="crispEdges"/>
<rect x="1395.6" y="415.2" width="36.4" height="16.4" fill="url(#pSand)" shape-rendering="crispEdges"/>
<rect x="1612" y="461.8" width="14" height="15.5" fill="url(#pLime)"/>
<rect x="1626" y="461.8" width="12" height="15.5" fill="url(#pMarl)"/>
<rect x="1443.6" y="557" width="194.4" height="12.5" fill="url(#pCalc)"/>
<rect x="1641.5" y="138.5" width="240.70000000000005" height="651.5" fill="url(#pShale)"/>
<rect x="1641.5" y="138.5" width="240.70000000000005" height="12.7" fill="url(#pMarl)"/>
<rect x="1641.5" y="151.2" width="240.70000000000005" height="139.8" fill="url(#pSand)"/>
<path d="M1641.5 291.0H1882.2" stroke="#4f79c4" stroke-width="1.2"/>
<rect x="1638" y="138.5" width="3.5" height="651.5" fill="#0e1540"/>
<rect x="1638" y="291" width="3.5" height="499" fill="#3c62b8"/>
<rect x="1395.5" y="570" width="242" height="14.5" fill="none" stroke="#3f74d0" stroke-width="1.2"/>
<path d="M2152.5 138.5V790" stroke="#4c5f8c" stroke-width="1"/>
<rect x="51" y="136.5" width="2160" height="2" fill="#5877b3"/>
<rect x="51" y="136.5" width="1.6" height="653.5" fill="#5877b3"/>
<rect x="141.2" y="136.5" width="3" height="653.5" fill="#5877b3"/>
<rect x="144.2" y="136.5" width="1.2" height="653.5" fill="#2a3a66"/>
<rect x="572.3" y="136.5" width="1.8" height="653.5" fill="#5877b3"/>
<rect x="574.1" y="136.5" width="0.8" height="653.5" fill="#2a3a66"/>
<rect x="574.9" y="136.5" width="1.8" height="653.5" fill="#5877b3"/>
<rect x="888.2" y="136.5" width="1.8" height="653.5" fill="#5877b3"/>
<rect x="890" y="136.5" width="0.8" height="653.5" fill="#2a3a66"/>
<rect x="890.8" y="136.5" width="1.8" height="653.5" fill="#5877b3"/>
<rect x="1390.5" y="136.5" width="2.7" height="653.5" fill="#5877b3"/>
<rect x="1393.2" y="136.5" width="2.3" height="653.5" fill="#4361ab"/>
<rect x="1882" y="136.5" width="2.4" height="653.5" fill="#5877b3"/>
<rect x="2209.2" y="136.5" width="2.8" height="653.5" fill="#5877b3"/>
<rect x="96" y="789" width="46" height="1.6" fill="#5877b3"/>
<rect x="1391" y="789.4" width="821" height="2.2" fill="#5877b3"/>
<path d="M146 579.5H2207" stroke="#ffffff" stroke-opacity="0.9" stroke-width="1.1"/>
<circle cx="193.5" cy="579.5" r="6" fill="#f0141e" stroke="#ffffff" stroke-opacity="0.35" stroke-width="1"/>
<circle cx="349" cy="579.5" r="6" fill="#1a8a22" stroke="#ffffff" stroke-opacity="0.35" stroke-width="1"/>
<circle cx="630" cy="579.5" r="6" fill="#8ecbe8" stroke="#ffffff" stroke-opacity="0.35" stroke-width="1"/>
<circle cx="949" cy="579.5" r="6" fill="#f0141e" stroke="#ffffff" stroke-opacity="0.35" stroke-width="1"/>
<circle cx="1011" cy="579.5" r="6" fill="#ff2fe0" stroke="#ffffff" stroke-opacity="0.35" stroke-width="1"/>
<circle cx="1062.8" cy="579.5" r="6" fill="#ff9a22" stroke="#ffffff" stroke-opacity="0.35" stroke-width="1"/>
<circle cx="1076" cy="579.5" r="6" fill="#fff12a" stroke="#ffffff" stroke-opacity="0.35" stroke-width="1"/>
<circle cx="1100.6" cy="579.5" r="6" fill="#1a2cf0" stroke="#ffffff" stroke-opacity="0.35" stroke-width="1"/>
<circle cx="1226" cy="579.5" r="6" fill="#ffffff" stroke="#ffffff" stroke-opacity="0.35" stroke-width="1"/>
<path d="M70 768l5 -5.5l5 5.5zM70 783.8l5 5.5l5 -5.5z" fill="#d2303c"/>
<path d="M53 770.8H96M53 780.7H96" stroke="#9a2c3a" stroke-width="1.2"/></svg>
<div class="idx" style="left:75px;top:186.2px">2000</div>
<div class="idx" style="left:75px;top:238.0px">4000</div>
<div class="idx" style="left:75px;top:289.8px">6000</div>
<div class="idx" style="left:75px;top:341.6px">8000</div>
<div class="idx" style="left:75px;top:393.4px">10000</div>
<div class="idx" style="left:75px;top:445.2px">12000</div>
<div class="idx" style="left:75px;top:497.0px">14000</div>
<div class="idx" style="left:75px;top:548.8px">16000</div>
<div class="idx" style="left:75px;top:600.6px">18000</div>
<div class="idx" style="left:75px;top:652.4px">20000</div>
<div class="idx" style="left:75px;top:704.2px">22000</div>
<div class="idx" style="left:75px;top:756.0px">24000</div>
<div class="idx" style="left:118px;top:138.7px;clip-path:inset(6.900px 0 0 0)">24400</div>
<div class="idx" style="left:118px;top:295px">24500</div>
<div class="idx" style="left:118px;top:450.3px">24600</div>
<div class="idx" style="left:118px;top:605.5px">24700</div>
<div class="idx" style="left:118px;top:761px">24800</div>
<div class="t" style="left:103.500px;top:575px;font-size:13px;width:44.500px;overflow:hidden;line-height:14px">24686.5</div>
<div class="desc" style="top:143px">24410: Cuttings show fine-grained, fissile<br>dark grey shale with high clay content and<br>poor consolidation. Minor interbedded marl<br>stringers observed. Occasional traces of<br>pyrite and faint hydrocarbon odor noted.<br>Cuttings are dull with moderate drilling break.</div>
<div class="desc" style="top:282.500px">24500: Transition zone<br>begins&#8212;predominantly dark grey shale with<br>minor limestone fragments. Slight increase in<br>siltstone content (~5%). ROP slightly<br>increased. Gas readings stable with minor<br>C1-C2 shows. Sample is firm, blocky, and<br>moderately calcareous.</div>
<div class="abs" style="left:2153px;top:772px;width:56.500px;height:17.500px;background:#2e3247;font-size:13.500px;line-height:18.500px;color:#fff;padding-left:13.500px;white-space:nowrap;text-shadow:0.400px 0 0 #fff"><span style="font-size:9px;position:relative;top:-1px">&#9654;</span>hide</div>
<div class="tip" style="left:275.5px;top:592.5px;width:164px;height:77px"><div class="h" style="margin-top:1px">24686.47ft</div><div class="row" style="top:23.0px"><div class="sw" style="background:#f0141e;margin-left:1.4px"></div><span class="n" style="margin-left:1.4px">ROP</span><span style="position:absolute;left:84.5px">: 57.3 ft/h</span></div><div class="row" style="top:43.4px"><div class="sw" style="background:#1a8a22;margin-left:1.4px"></div><span class="n" style="margin-left:1.4px">GR</span><span style="position:absolute;left:84.5px">: 71.97 API</span></div></div>
<div class="tip" style="left:631px;top:592.5px;width:200px;height:118px"><div class="h" style="margin-top:0px">24686.47ft</div><div class="row" style="top:23.3px"><div class="sw" style="background:#fff12a;margin-left:1.6px"></div><span class="n" style="margin-left:1.6px">RAAELX</span><span style="position:absolute;left:109px">: 1.02 ohm.m</span></div><div class="row" style="top:43.7px"><div class="sw" style="background:#ffffff;margin-left:1.6px"></div><span class="n" style="margin-left:1.6px">RACELX</span><span style="position:absolute;left:109px">: 1.02 ohm.m</span></div><div class="row" style="top:64.1px"><div class="sw" style="background:#2fe03a;margin-left:1.6px"></div><span class="n" style="margin-left:1.6px">RPAEHX</span><span style="position:absolute;left:109px">: 1.02 ohm.m</span></div><div class="row" style="top:84.4px"><div class="sw" style="background:#7fd0ea;margin-left:1.6px"></div><span class="n" style="margin-left:1.6px">RPAHX</span><span style="position:absolute;left:109px">: 1 ohm.m</span></div></div>
<div class="tip" style="left:1019.5px;top:369.5px;width:244px;height:198.5px"><div class="h" style="margin-top:0px">24686.47ft</div><div class="row" style="top:22.3px"><div class="sw" style="background:#f0141e;margin-left:0px"></div><span class="n" style="margin-left:0px">TOTAL_GAS</span><span style="position:absolute;left:144.5px">: 0.5 %</span></div><div class="row" style="top:42.7px"><div class="sw" style="background:#ffffff;margin-left:0px"></div><span class="n" style="margin-left:0px">MUDGAS_C1</span><span style="position:absolute;left:144.5px">: 1077.96 ppm</span></div><div class="row" style="top:63.1px"><div class="sw" style="background:#1a2cf0;margin-left:0px"></div><span class="n" style="margin-left:0px">MUDGAS_C2</span><span style="position:absolute;left:144.5px">: 33.09 ppm</span></div><div class="row" style="top:83.4px"><div class="sw" style="background:#fff12a;margin-left:0px"></div><span class="n" style="margin-left:0px">MUDGAS_C3</span><span style="position:absolute;left:144.5px">: 16.85 ppm</span></div><div class="row" style="top:103.8px"><div class="sw" style="background:#ff9a22;margin-left:0px"></div><span class="n" style="margin-left:0px">MUDGAS_IC4</span><span style="position:absolute;left:144.5px">: 11.63 ppm</span></div><div class="row" style="top:124.2px"><div class="sw" style="background:#2fe03a;margin-left:0px"></div><span class="n" style="margin-left:0px">MUDGAS_IC5</span><span style="position:absolute;left:144.5px">: 0 ppm</span></div><div class="row" style="top:144.6px"><div class="sw" style="background:#ff2fe0;margin-left:0px"></div><span class="n" style="margin-left:0px">MUDGAS_NC4</span><span style="position:absolute;left:144.5px">: 2.79 ppm</span></div><div class="row" style="top:165.0px"><div class="sw" style="background:#7fd0ea;margin-left:0px"></div><span class="n" style="margin-left:0px">MUDGAS_NC5</span><span style="position:absolute;left:144.5px">: 0 ppm</span></div></div>
<div class="abs" style="left:1413px;top:596.500px;width:205px;height:63.500px;background:rgba(34,37,52,0.96);border-radius:3px;font-size:13px;color:#fff"><div class="t" style="left:13.500px;top:9.5px;line-height:15px">Md Top</div><div class="t" style="left:103px;top:9.5px;line-height:15px">: 24680 ft</div><div class="t" style="left:13.500px;top:28.5px;line-height:15px">Md Bottom</div><div class="t" style="left:103px;top:28.5px;line-height:15px">: 24690 ft</div><div class="abs" style="left:14px;top:48.5px;width:12px;height:12px;background:#9d9d9d"></div><div class="abs" style="left:17px;top:48.5px;width:6px;height:4px;background:#2a2c38"></div><div class="t" style="left:33px;top:47.5px;line-height:15px">sh</div><div class="t" style="left:103px;top:47.5px;line-height:15px">: 100%</div></div>
<div class="abs" style="left:1560px;top:596.500px;width:204.5px;height:63.500px;background:rgba(34,37,52,0.96);border-radius:3px;font-size:13px;color:#fff"><div class="t" style="left:13.500px;top:9.5px;line-height:15px">Md Top</div><div class="t" style="left:103px;top:9.5px;line-height:15px">: 24500 ft</div><div class="t" style="left:13.500px;top:28.5px;line-height:15px">Md Bottom</div><div class="t" style="left:103px;top:28.5px;line-height:15px">: 25080 ft</div><div class="abs" style="left:14px;top:48.5px;width:12px;height:12px;background:#9d9d9d"></div><div class="abs" style="left:17px;top:48.5px;width:6px;height:4px;background:#2a2c38"></div><div class="t" style="left:33px;top:47.5px;line-height:15px">sh</div><div class="t" style="left:103px;top:47.5px;line-height:15px">: 100%</div></div>
<div class="bar" style="left:144px;top:790px;width:427px;background:#ff0012;color:#fff"><span class="l">0</span><span class="c" style="left:36px">ROP 51.3 ft/h</span><span class="r">500</span></div>
<div class="abs" style="left:144px;top:816.500px;width:427px;height:22.600px;background:linear-gradient(90deg,#fff33c 0%,#fff03a 5%,#f18c30 46%,#d81c3e 100%)"></div>
<svg class="abs" style="left:155px;top:820px" width="16" height="16" viewBox="0 0 16 16"><path d="M1 5.500H8V1.500L15 8L8 14.500V10.500H1Z" fill="#000"/></svg>
<div class="bar" style="left:144px;top:841px;width:427px;background:#117a1c;color:#fff"><span class="l">0</span><span class="c" style="left:35px">GR 2.88 API</span><span class="r">150</span></div>
<div class="bar" style="left:575px;top:790px;width:311.5px;background:#ffff33;color:#000"><span class="l">0.2</span><span style="position:absolute;right:54px">RAAELX 83.42 ohm.m</span><span class="r">2000</span></div>
<div class="bar" style="left:575px;top:815.5px;width:311.5px;background:#ffffff;color:#000"><span class="l">0.2</span><span style="position:absolute;right:54px">RACELX 83.42 ohm.m</span><span class="r">2000</span></div>
<div class="bar" style="left:575px;top:841px;width:311.5px;background:#22f033;color:#000"><span class="l">0.2</span><span style="position:absolute;right:48px">RPAEHX 348.61 ohm.m</span><span class="r">2000</span></div>
<div class="bar" style="left:575px;top:866.5px;width:311.5px;background:#87cde9;color:#000"><span class="l">0.2</span><span style="position:absolute;right:54px">RPAHX 348.61 ohm.m</span><span class="r">2000</span></div>
<div class="bar" style="left:891px;top:790.00px;width:497.5px;background:#ff0012;color:#fff"><span class="l" style="left:6px">0.1</span><span class="c" style="left:58.0px">TOTAL_GAS 0.15 %</span><span class="r" style="right:6px">100000</span></div>
<div class="bar" style="left:891px;top:815.50px;width:497.5px;background:#ffffff;color:#000"><span class="l" style="left:6px">0.1</span><span class="c" style="left:75.4px">MUDGAS_C1 325.56 ppm</span><span class="r" style="right:6px">100000</span></div>
<div class="bar" style="left:891px;top:841.00px;width:497.5px;background:#1428fa;color:#fff"><span class="l" style="left:6px">0.1</span><span class="c" style="left:68.2px">MUDGAS_C2 13.6 ppm</span><span class="r" style="right:6px">100000</span></div>
<div class="bar" style="left:891px;top:866.50px;width:497.5px;background:#ffff33;color:#000"><span class="l" style="left:6px">0.1</span><span class="c" style="left:68.2px">MUDGAS_C3 8.32 ppm</span><span class="r" style="right:6px">100000</span></div>
<div class="bar" style="left:891px;top:892.00px;width:497.5px;background:#ff9a22;color:#000"><span class="l" style="left:6px">0.1</span><span class="c" style="left:69.4px">MUDGAS_IC4 3.71 ppm</span><span class="r" style="right:6px">100000</span></div>
<div class="bar" style="left:891px;top:917.50px;width:497.5px;background:#22f033;color:#000"><span class="l" style="left:6px">0.1</span><span class="c" style="left:61.0px">MUDGAS_IC5 0 ppm</span><span class="r" style="right:6px">100000</span></div>
<div class="bar" style="left:891px;top:943.00px;width:497.5px;background:#ff22e0;color:#fff"><span class="l" style="left:6px">0.1</span><span class="c" style="left:63.4px">MUDGAS_NC4 0 ppm</span><span class="r" style="right:6px">100000</span></div>
<div class="bar" style="left:891px;top:968.50px;width:497.5px;background:#87cde9;color:#000"><span class="l" style="left:6px">0.1</span><span class="c" style="left:63.4px">MUDGAS_NC5 0 ppm</span><span class="r" style="right:6px">100000</span></div>
<svg class="lic" style="left:1404px" viewBox="0 0 16 16"><rect width="16" height="16" fill="#fff036"/><rect x="6" y="0" width="4" height="3" fill="#6b6420"/><circle cx="4" cy="7" r="1.1" fill="#6a5a00"/><circle cx="12" cy="7" r="1.1" fill="#6a5a00"/><circle cx="8" cy="12" r="1.1" fill="#6a5a00"/></svg>
<div class="leg" style="left:1426px">Sandstone</div>
<svg class="lic" style="left:1512px" viewBox="0 0 16 16"><rect width="16" height="16" fill="#0f7f78"/><rect x="0" y="0" width="3" height="3" fill="#252838"/><rect x="6" y="13" width="5" height="3" fill="#252838"/><path d="M4 6H12" stroke="#0a5f5a" stroke-width="1.2"/></svg>
<div class="leg" style="left:1534px">Siltstone</div>
<svg class="lic" style="left:1606px" viewBox="0 0 16 16"><rect width="16" height="16" fill="#a9a9a9"/><rect x="5.500" y="0" width="5" height="4" fill="#3a3c4a"/><rect x="5.500" y="12.500" width="5" height="3.500" fill="#3a3c4a"/><path d="M2 8H14" stroke="#777" stroke-width="1.200"/></svg>
<div class="leg" style="left:1627px">Shale</div>
<svg class="lic" style="left:1680px" viewBox="0 0 16 16"><rect width="16" height="16" fill="#25bdff"/><path d="M0 5.500H16M0 10.500H16M8 0V5.500M8 10.500V16M8 5.500V10.500" stroke="#1158e0" stroke-width="1.500"/></svg>
<div class="leg" style="left:1701px">Limestone</div>
<svg class="lic" style="left:1785px" viewBox="0 0 16 16"><rect width="16" height="16" fill="#0f7f78"/><path d="M3 10l3-3l3 2l4-3" stroke="#05302e" stroke-width="1.3" fill="none"/></svg>
<div class="leg" style="left:1807px">Marl</div>
<svg class="lic" style="left:1849px" viewBox="0 0 16 16"><rect width="16" height="16" fill="#2bea4a"/><rect x="0" y="3.500" width="16" height="2.200" fill="#d9ffdf"/><rect x="0" y="9.500" width="16" height="2.200" fill="#d9ffdf"/><rect x="6.900" y="0" width="2.200" height="16" fill="#d9ffdf" fill-opacity="0.8"/></svg>
<div class="leg" style="left:1871px">Calcarenite</div>
<div class="abs" style="left:52px;top:791.500px;width:44px;height:16.500px;background:#2d3145;font-size:12.500px;line-height:16px;color:#fff;padding-left:6px;white-space:nowrap"><span style="display:inline-block;width:0;height:0;border-top:4px solid transparent;border-bottom:4px solid transparent;border-left:4.500px solid #fff;margin-right:3px;position:relative;top:0.500px"></span>Hide</div>
<div class="btn" style="left:52px;top:814.500px;width:88px;height:27px;font-size:16px;line-height:25px;padding-left:13.500px">MD</div>
<div class="abs" style="left:119px;top:825px;width:0;height:0;border-left:5px solid transparent;border-right:5px solid transparent;border-top:5.500px solid #fff"></div>
<div class="btn" style="left:52px;top:847.500px;width:88px;height:28.500px;font-size:13px;line-height:26px;padding-left:4px">Set to Defa...</div>
<div class="abs" style="left:0;top:1017.500px;width:2219px;height:2px;background:#1c1e2c"></div>
<div class="t" style="left:4px;top:1030px;font-size:12.800px;color:#b4b7c2">&#169; 2025 Petrolink All Rights Reserved</div>
<div class="abs" style="left:1068px;top:1032px;width:8px;height:8px;border-radius:50%;background:#ea4b4b"></div>
<div class="abs" style="left:1093.5px;top:1032px;width:8px;height:8px;border-radius:50%;background:#f0923a"></div>
<div class="abs" style="left:1119px;top:1032px;width:8px;height:8px;border-radius:50%;background:#3fb950"></div>
<div class="abs" style="left:1145px;top:1032px;width:8px;height:8px;border-radius:50%;background:#3b82f6"></div>
<svg class="abs" style="left:1729px;top:1029px" width="12" height="12" viewBox="0 0 12 12"><circle cx="6" cy="6" r="5" fill="#b4b7c2"/><path d="M6 3V6.300H8.500" stroke="#252838" stroke-width="1.200" fill="none"/></svg>
<div class="t" style="left:1751px;top:1029.500px;font-size:12.800px;color:#b4b7c2">Times are shown in local timezone - <span style="color:#3f8cf0">UTC+01:00</span></div>
<div class="t" style="left:2057px;top:1030px;font-size:12.300px;color:#b4b7c2">SERVICE STATUS</div>
<div class="abs" style="left:2163px;top:1027.500px;width:49px;height:16.500px;border-radius:4px;background:#6bab45;color:#fff;font-size:13px;line-height:16.500px;text-align:center">Online</div>
</body></html>
